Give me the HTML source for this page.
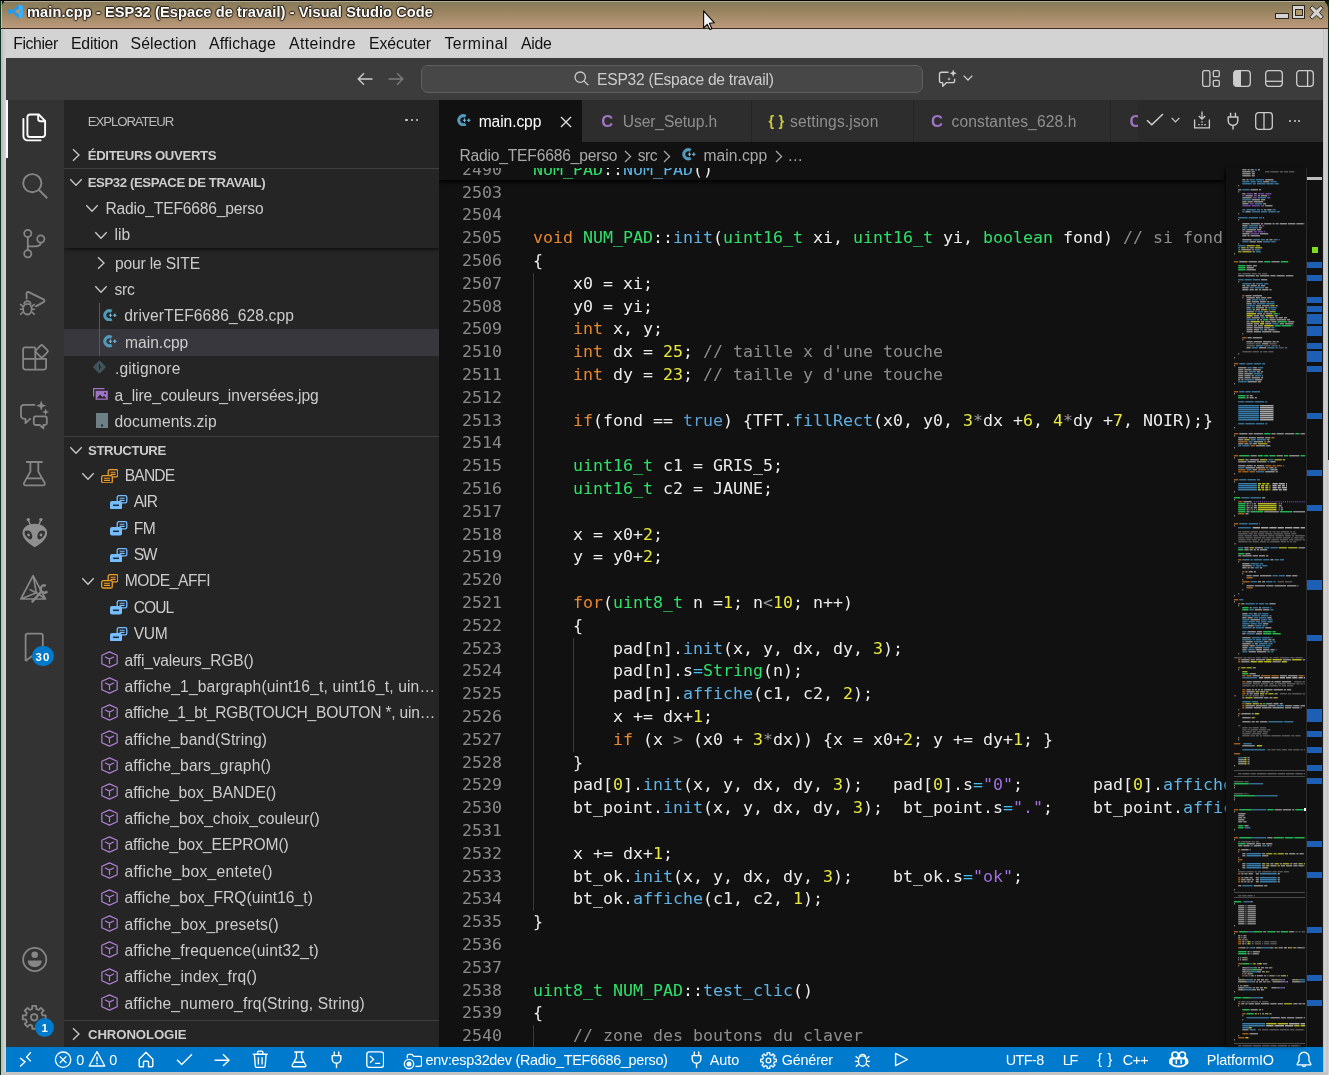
<!DOCTYPE html>
<html lang="fr"><head><meta charset="utf-8"><title>main.cpp - ESP32 (Espace de travail) - Visual Studio Code</title>
<style>
html,body{margin:0;padding:0}
body{width:1329px;height:1075px;overflow:hidden;position:relative;background:#c9c9c9;font-family:"Liberation Sans", sans-serif;}
#root{position:absolute;left:0;top:0;width:1329px;height:1075px;overflow:hidden;will-change:transform}
.r{position:absolute;display:block}
.t{position:absolute;white-space:pre;line-height:20px;height:20px}
.b{font-weight:bold}
.code{position:absolute;white-space:pre;font-family:"DejaVu Sans Mono", "Liberation Mono", monospace;font-size:16.63px;line-height:22.8px;height:22.8px;color:#ececec}
.ln{color:#8a8a8a}
.k{color:#e8872b}.ty{color:#2fe06a}.f{color:#5fb4e6}.n{color:#eaea3c}.c{color:#8c8c8c}.o{color:#9a9a9a}.bl{color:#5a9fd6}.eq{color:#45c0f5}.s{color:#a070e0}
</style></head>
<body>
<div id="root">
<div class="r" style="left:0px;top:0px;width:1329px;height:1075px;background:#c9c9c9;"></div>
<div class="r" style="left:0px;top:0px;width:1329px;height:10px;background:#0a1f15;"></div>
<div class="r" style="left:0px;top:0px;width:1px;height:1075px;background:#0d3320;"></div>
<div class="r" style="left:1328px;top:0px;width:1px;height:460px;background:#10241a;"></div>
<div class="r" style="left:1328px;top:460px;width:1px;height:615px;background:#d4d4d4;"></div>
<div class="r" style="left:0px;top:0px;width:1329px;height:1px;background:#060504;"></div>
<div class="r" style="left:1px;top:1px;width:1327px;height:27px;background:linear-gradient(#857b5a 0,#917f5c 25%,#a38a67 55%,#bb997c 100%);border-radius:7px 7px 0 0;"></div>
<div class="r" style="left:1px;top:28px;width:1327px;height:1px;background:#3a2c1e;"></div>
<div class="r" style="left:6px;top:29px;width:1317px;height:29px;background:#d3d3d3;"></div>
<div class="r" style="left:1px;top:29px;width:5px;height:1046px;background:linear-gradient(90deg,#b9bcbb,#d6d6d6);"></div>
<div class="r" style="left:1323px;top:29px;width:5px;height:1046px;background:linear-gradient(90deg,#b5b5b5 0,#d2d2d2 30%,#c4c6c4);"></div>
<div class="r" style="left:1px;top:1072px;width:1327px;height:3px;background:#c4c4c4;"></div>
<div class="t" style="left:27.0px;top:1.9px;font-size:14.6px;color:#fff;font-weight:bold;letter-spacing:0.085px;text-shadow:0 0 2px #2a2218,0 1px 1px #2a2218,1px 0 1px #2a2218,-1px 0 1px #2a2218,0 -1px 1px #2a2218;">main.cpp - ESP32 (Espace de travail) - Visual Studio Code</div>
<div class="t" style="left:13.2px;top:34.2px;font-size:15.8px;color:#111;letter-spacing:-0.387px;">Fichier</div>
<div class="t" style="left:71.0px;top:34.2px;font-size:15.8px;color:#111;letter-spacing:-0.188px;">Edition</div>
<div class="t" style="left:130.5px;top:34.2px;font-size:15.8px;color:#111;letter-spacing:0.111px;">Sélection</div>
<div class="t" style="left:209.0px;top:34.2px;font-size:15.8px;color:#111;letter-spacing:0.156px;">Affichage</div>
<div class="t" style="left:289.0px;top:34.2px;font-size:15.8px;color:#111;letter-spacing:0.418px;">Atteindre</div>
<div class="t" style="left:369.0px;top:34.2px;font-size:15.8px;color:#111;letter-spacing:-0.043px;">Exécuter</div>
<div class="t" style="left:444.5px;top:34.2px;font-size:15.8px;color:#111;letter-spacing:0.475px;">Terminal</div>
<div class="t" style="left:521.0px;top:34.2px;font-size:15.8px;color:#111;letter-spacing:-0.281px;">Aide</div>
<div class="r" style="left:6px;top:58px;width:1317px;height:42px;background:#3c3c3c;"></div>
<div class="r" style="left:6px;top:100px;width:58px;height:947px;background:#333333;"></div>
<div class="r" style="left:64px;top:100px;width:375px;height:947px;background:#252526;"></div>
<div class="r" style="left:439px;top:100px;width:884px;height:42px;background:#252526;"></div>
<div class="r" style="left:439px;top:142px;width:884px;height:905px;background:#111111;"></div>
<div class="r" style="left:6px;top:1047px;width:1317px;height:25px;background:#007acc;"></div>
<div class="r" style="left:439px;top:168px;width:787px;height:879px;overflow:hidden">
<div class="r" style="left:94.0px;top:104.9px;width:1px;height:638.4px;background:#3a3a3a"></div>
<div class="r" style="left:134.0px;top:469.6px;width:1px;height:114.0px;background:#3a3a3a"></div>
<div class="r" style="left:94.0px;top:857.2px;width:1px;height:45.6px;background:#3a3a3a"></div>
<div class="code ln" style="left:23.0px;top:13.65px">2503</div>
<div class="code ln" style="left:23.0px;top:36.45px">2504</div>
<div class="code ln" style="left:23.0px;top:59.25px">2505</div>
<div class="code" style="left:94.0px;top:59.25px"><span class="k">void</span> <span class="ty">NUM_PAD</span>::<span class="f">init</span>(<span class="ty">uint16_t</span> xi, <span class="ty">uint16_t</span> yi, <span class="ty">boolean</span> fond) <span class="c">// si fond == true, efface le fond</span></div>
<div class="code ln" style="left:23.0px;top:82.05px">2506</div>
<div class="code" style="left:94.0px;top:82.05px">{</div>
<div class="code ln" style="left:23.0px;top:104.85px">2507</div>
<div class="code" style="left:94.0px;top:104.85px">    x0 = xi;</div>
<div class="code ln" style="left:23.0px;top:127.65px">2508</div>
<div class="code" style="left:94.0px;top:127.65px">    y0 = yi;</div>
<div class="code ln" style="left:23.0px;top:150.45px">2509</div>
<div class="code" style="left:94.0px;top:150.45px">    <span class="k">int</span> x, y;</div>
<div class="code ln" style="left:23.0px;top:173.25px">2510</div>
<div class="code" style="left:94.0px;top:173.25px">    <span class="k">int</span> dx = <span class="n">25</span>; <span class="c">// taille x d'une touche</span></div>
<div class="code ln" style="left:23.0px;top:196.05px">2511</div>
<div class="code" style="left:94.0px;top:196.05px">    <span class="k">int</span> dy = <span class="n">23</span>; <span class="c">// taille y d'une touche</span></div>
<div class="code ln" style="left:23.0px;top:218.85px">2512</div>
<div class="code ln" style="left:23.0px;top:241.65px">2513</div>
<div class="code" style="left:94.0px;top:241.65px">    <span class="k">if</span>(fond == <span class="bl">true</span>) {TFT.<span class="f">fillRect</span>(x0, y0, <span class="n">3</span><span class="o">*</span>dx +<span class="n">6</span>, <span class="n">4</span><span class="o">*</span>dy +<span class="n">7</span>, NOIR);}</div>
<div class="code ln" style="left:23.0px;top:264.45px">2514</div>
<div class="code ln" style="left:23.0px;top:287.25px">2515</div>
<div class="code" style="left:94.0px;top:287.25px">    <span class="ty">uint16_t</span> c1 = GRIS_5;</div>
<div class="code ln" style="left:23.0px;top:310.05px">2516</div>
<div class="code" style="left:94.0px;top:310.05px">    <span class="ty">uint16_t</span> c2 = JAUNE;</div>
<div class="code ln" style="left:23.0px;top:332.85px">2517</div>
<div class="code ln" style="left:23.0px;top:355.65px">2518</div>
<div class="code" style="left:94.0px;top:355.65px">    x = x0+<span class="n">2</span>;</div>
<div class="code ln" style="left:23.0px;top:378.45px">2519</div>
<div class="code" style="left:94.0px;top:378.45px">    y = y0+<span class="n">2</span>;</div>
<div class="code ln" style="left:23.0px;top:401.25px">2520</div>
<div class="code ln" style="left:23.0px;top:424.05px">2521</div>
<div class="code" style="left:94.0px;top:424.05px">    <span class="k">for</span>(<span class="ty">uint8_t</span> n =<span class="n">1</span>; n<span class="o">&lt;</span><span class="n">10</span>; n++)</div>
<div class="code ln" style="left:23.0px;top:446.85px">2522</div>
<div class="code" style="left:94.0px;top:446.85px">    {</div>
<div class="code ln" style="left:23.0px;top:469.65px">2523</div>
<div class="code" style="left:94.0px;top:469.65px">        pad[n].<span class="f">init</span>(x, y, dx, dy, <span class="n">3</span>);</div>
<div class="code ln" style="left:23.0px;top:492.45px">2524</div>
<div class="code" style="left:94.0px;top:492.45px">        pad[n].s<span class="eq">=</span><span class="ty">String</span>(n);</div>
<div class="code ln" style="left:23.0px;top:515.25px">2525</div>
<div class="code" style="left:94.0px;top:515.25px">        pad[n].<span class="f">affiche</span>(c1, c2, <span class="n">2</span>);</div>
<div class="code ln" style="left:23.0px;top:538.05px">2526</div>
<div class="code" style="left:94.0px;top:538.05px">        x += dx+<span class="n">1</span>;</div>
<div class="code ln" style="left:23.0px;top:560.85px">2527</div>
<div class="code" style="left:94.0px;top:560.85px">        <span class="k">if</span> (x <span class="o">&gt;</span> (x0 + <span class="n">3</span><span class="o">*</span>dx)) {x = x0+<span class="n">2</span>; y += dy+<span class="n">1</span>; }</div>
<div class="code ln" style="left:23.0px;top:583.65px">2528</div>
<div class="code" style="left:94.0px;top:583.65px">    }</div>
<div class="code ln" style="left:23.0px;top:606.45px">2529</div>
<div class="code" style="left:94.0px;top:606.45px">    pad[<span class="n">0</span>].<span class="f">init</span>(x, y, dx, dy, <span class="n">3</span>);   pad[<span class="n">0</span>].s<span class="eq">=</span><span class="s">"0"</span>;       pad[<span class="n">0</span>].<span class="f">affiche</span>(c1, c2, <span class="n">0</span>);</div>
<div class="code ln" style="left:23.0px;top:629.25px">2530</div>
<div class="code" style="left:94.0px;top:629.25px">    bt_point.<span class="f">init</span>(x, y, dx, dy, <span class="n">3</span>);  bt_point.s<span class="eq">=</span><span class="s">"."</span>;    bt_point.<span class="f">affiche</span>(c1, c2, <span class="n">0</span>);</div>
<div class="code ln" style="left:23.0px;top:652.05px">2531</div>
<div class="code ln" style="left:23.0px;top:674.85px">2532</div>
<div class="code" style="left:94.0px;top:674.85px">    x += dx+<span class="n">1</span>;</div>
<div class="code ln" style="left:23.0px;top:697.65px">2533</div>
<div class="code" style="left:94.0px;top:697.65px">    bt_ok.<span class="f">init</span>(x, y, dx, dy, <span class="n">3</span>);    bt_ok.s<span class="eq">=</span><span class="s">"ok"</span>;</div>
<div class="code ln" style="left:23.0px;top:720.45px">2534</div>
<div class="code" style="left:94.0px;top:720.45px">    bt_ok.<span class="f">affiche</span>(c1, c2, <span class="n">1</span>);</div>
<div class="code ln" style="left:23.0px;top:743.25px">2535</div>
<div class="code" style="left:94.0px;top:743.25px">}</div>
<div class="code ln" style="left:23.0px;top:766.05px">2536</div>
<div class="code ln" style="left:23.0px;top:788.85px">2537</div>
<div class="code ln" style="left:23.0px;top:811.65px">2538</div>
<div class="code" style="left:94.0px;top:811.65px"><span class="ty">uint8_t</span> <span class="ty">NUM_PAD</span>::<span class="f">test_clic</span>()</div>
<div class="code ln" style="left:23.0px;top:834.45px">2539</div>
<div class="code" style="left:94.0px;top:834.45px">{</div>
<div class="code ln" style="left:23.0px;top:857.25px">2540</div>
<div class="code" style="left:94.0px;top:857.25px">    <span class="c">// zone des boutons du claver</span></div>
<div class="r" style="left:0;top:0;width:785px;height:12px;background:#111;box-shadow:0 2px 4px #000;overflow:hidden">
<div class="code ln" style="left:23.0px;top:-8.80px">2490</div>
<div class="code" style="left:94.0px;top:-8.80px"><span class="ty">NUM_PAD</span>::<span class="f">NUM_PAD</span>()</div>
</div>
</div>
<div class="t" style="left:87.7px;top:111.6px;font-size:13.2px;color:#bbbbbb;letter-spacing:-1.056px;">EXPLORATEUR</div>
<div class="r" style="left:405.3px;top:118.9px;width:2.6px;height:2.6px;background:#d0d0d0;border-radius:1.3px;"></div>
<div class="r" style="left:410.5px;top:118.9px;width:2.6px;height:2.6px;background:#d0d0d0;border-radius:1.3px;"></div>
<div class="r" style="left:415.7px;top:118.9px;width:2.6px;height:2.6px;background:#d0d0d0;border-radius:1.3px;"></div>
<svg class="r" style="left:68px;top:147.3px;" width="16" height="16" viewBox="0 0 16 16"><polyline points="5.00,2.30 11.00,8 5.00,13.70" fill="none" stroke="#c8c8c8" stroke-width="1.35"/></svg>
<div class="t" style="left:87.7px;top:146.1px;font-size:13.2px;color:#cccccc;font-weight:bold;letter-spacing:-0.344px;">ÉDITEURS OUVERTS</div>
<div class="r" style="left:64px;top:168px;width:375px;height:1px;background:#3f3f40;"></div>
<svg class="r" style="left:68px;top:174px;" width="16" height="16" viewBox="0 0 16 16"><polyline points="2.30,5.30 8,11.30 13.70,5.30" fill="none" stroke="#c8c8c8" stroke-width="1.35"/></svg>
<div class="t" style="left:87.7px;top:173.3px;font-size:13.2px;color:#cccccc;font-weight:bold;letter-spacing:-0.404px;">ESP32 (ESPACE DE TRAVAIL)</div>
<div class="r" style="left:64px;top:329.2px;width:375px;height:26.4px;background:#37373d;"></div>
<div class="r" style="left:99px;top:302.8px;width:1px;height:52.8px;background:#585858;"></div>
<svg class="r" style="left:93.3px;top:254.5px;" width="16" height="16" viewBox="0 0 16 16"><polyline points="5.00,2.30 11.00,8 5.00,13.70" fill="none" stroke="#c8c8c8" stroke-width="1.35"/></svg>
<div class="t" style="left:115.0px;top:253.6px;font-size:15.6px;color:#cccccc;letter-spacing:-0.148px;">pour le SITE</div>
<svg class="r" style="left:93px;top:281.4px;" width="16" height="16" viewBox="0 0 16 16"><polyline points="2.30,5.30 8,11.30 13.70,5.30" fill="none" stroke="#c8c8c8" stroke-width="1.35"/></svg>
<div class="t" style="left:114.5px;top:280.0px;font-size:15.6px;color:#cccccc;letter-spacing:-0.300px;">src</div>
<div class="t" style="left:124.3px;top:306.4px;font-size:15.6px;color:#cccccc;letter-spacing:0.119px;">driverTEF6686_628.cpp</div>
<div class="t" style="left:125.0px;top:332.8px;font-size:15.6px;color:#cccccc;">main.cpp</div>
<div class="t" style="left:115.0px;top:359.2px;font-size:15.6px;color:#cccccc;letter-spacing:0.134px;">.gitignore</div>
<div class="t" style="left:114.5px;top:385.6px;font-size:15.6px;color:#cccccc;letter-spacing:-0.073px;">a_lire_couleurs_inversées.jpg</div>
<div class="t" style="left:114.5px;top:412.0px;font-size:15.6px;color:#cccccc;letter-spacing:0.127px;">documents.zip</div>
<div class="r" style="left:64px;top:195px;width:375px;height:62px;overflow:hidden"><div class="r" style="left:0;top:0;width:375px;height:53px;background:#252526;box-shadow:0 1px 4px rgba(0,0,0,.8)"></div></div>
<svg class="r" style="left:84px;top:200.2px;" width="16" height="16" viewBox="0 0 16 16"><polyline points="2.30,5.30 8,11.30 13.70,5.30" fill="none" stroke="#c8c8c8" stroke-width="1.35"/></svg>
<div class="t" style="left:105.4px;top:198.6px;font-size:15.6px;color:#cccccc;letter-spacing:-0.166px;">Radio_TEF6686_perso</div>
<svg class="r" style="left:93px;top:226.6px;" width="16" height="16" viewBox="0 0 16 16"><polyline points="2.30,5.30 8,11.30 13.70,5.30" fill="none" stroke="#c8c8c8" stroke-width="1.35"/></svg>
<div class="t" style="left:114.5px;top:225.0px;font-size:15.6px;color:#cccccc;letter-spacing:0.032px;">lib</div>
<div class="r" style="left:64px;top:436px;width:375px;height:1px;background:#3f3f40;"></div>
<svg class="r" style="left:68px;top:442px;" width="16" height="16" viewBox="0 0 16 16"><polyline points="2.30,5.30 8,11.30 13.70,5.30" fill="none" stroke="#c8c8c8" stroke-width="1.35"/></svg>
<div class="t" style="left:88.0px;top:441.1px;font-size:13.2px;color:#cccccc;font-weight:bold;letter-spacing:-0.392px;">STRUCTURE</div>
<svg class="r" style="left:79.5px;top:467.7px;" width="16" height="16" viewBox="0 0 16 16"><polyline points="2.30,5.30 8,11.30 13.70,5.30" fill="none" stroke="#c8c8c8" stroke-width="1.35"/></svg>
<svg class="r" style="left:100.8px;top:468.5px;" width="17.5" height="14.6" viewBox="0 0 17.5 14.6"><rect x="7.2" y="0.7" width="9.6" height="7.2" rx="1.6" fill="none" stroke="#ee9d28" stroke-width="1.3"/><path d="M9.6 3.2h5M9.6 5.4h5" stroke="#ee9d28" stroke-width="1.1"/><rect x="0.7" y="6.6" width="10.6" height="7.4" rx="1.6" fill="#252526" stroke="#ee9d28" stroke-width="1.3"/><path d="M3 9.2h6M3 11.4h6" stroke="#ee9d28" stroke-width="1.1"/></svg>
<div class="t" style="left:124.7px;top:465.7px;font-size:15.6px;color:#cccccc;letter-spacing:-0.807px;">BANDE</div>
<svg class="r" style="left:110.2px;top:494.7px;" width="17.5" height="14.6" viewBox="0 0 17.5 14.6"><rect x="7.2" y="0.7" width="9.6" height="7.2" rx="1.6" fill="none" stroke="#75beff" stroke-width="1.3"/><path d="M9.6 3.2h5M9.6 5.4h5" stroke="#75beff" stroke-width="1.1"/><rect x="0" y="6" width="12" height="8.6" rx="2" fill="#75beff"/><path d="M3 10.3h6" stroke="#1d2a36" stroke-width="1.5"/></svg>
<div class="t" style="left:133.7px;top:492.1px;font-size:15.6px;color:#cccccc;letter-spacing:-0.833px;">AIR</div>
<svg class="r" style="left:110.2px;top:521.1px;" width="17.5" height="14.6" viewBox="0 0 17.5 14.6"><rect x="7.2" y="0.7" width="9.6" height="7.2" rx="1.6" fill="none" stroke="#75beff" stroke-width="1.3"/><path d="M9.6 3.2h5M9.6 5.4h5" stroke="#75beff" stroke-width="1.1"/><rect x="0" y="6" width="12" height="8.6" rx="2" fill="#75beff"/><path d="M3 10.3h6" stroke="#1d2a36" stroke-width="1.5"/></svg>
<div class="t" style="left:133.7px;top:518.5px;font-size:15.6px;color:#cccccc;letter-spacing:-0.558px;">FM</div>
<svg class="r" style="left:110.2px;top:547.5px;" width="17.5" height="14.6" viewBox="0 0 17.5 14.6"><rect x="7.2" y="0.7" width="9.6" height="7.2" rx="1.6" fill="none" stroke="#75beff" stroke-width="1.3"/><path d="M9.6 3.2h5M9.6 5.4h5" stroke="#75beff" stroke-width="1.1"/><rect x="0" y="6" width="12" height="8.6" rx="2" fill="#75beff"/><path d="M3 10.3h6" stroke="#1d2a36" stroke-width="1.5"/></svg>
<div class="t" style="left:133.7px;top:544.9px;font-size:15.6px;color:#cccccc;letter-spacing:-1.312px;">SW</div>
<svg class="r" style="left:79.5px;top:573.3px;" width="16" height="16" viewBox="0 0 16 16"><polyline points="2.30,5.30 8,11.30 13.70,5.30" fill="none" stroke="#c8c8c8" stroke-width="1.35"/></svg>
<svg class="r" style="left:100.8px;top:574.1px;" width="17.5" height="14.6" viewBox="0 0 17.5 14.6"><rect x="7.2" y="0.7" width="9.6" height="7.2" rx="1.6" fill="none" stroke="#ee9d28" stroke-width="1.3"/><path d="M9.6 3.2h5M9.6 5.4h5" stroke="#ee9d28" stroke-width="1.1"/><rect x="0.7" y="6.6" width="10.6" height="7.4" rx="1.6" fill="#252526" stroke="#ee9d28" stroke-width="1.3"/><path d="M3 9.2h6M3 11.4h6" stroke="#ee9d28" stroke-width="1.1"/></svg>
<div class="t" style="left:124.7px;top:571.3px;font-size:15.6px;color:#cccccc;letter-spacing:-0.428px;">MODE_AFFI</div>
<svg class="r" style="left:110.2px;top:600.3px;" width="17.5" height="14.6" viewBox="0 0 17.5 14.6"><rect x="7.2" y="0.7" width="9.6" height="7.2" rx="1.6" fill="none" stroke="#75beff" stroke-width="1.3"/><path d="M9.6 3.2h5M9.6 5.4h5" stroke="#75beff" stroke-width="1.1"/><rect x="0" y="6" width="12" height="8.6" rx="2" fill="#75beff"/><path d="M3 10.3h6" stroke="#1d2a36" stroke-width="1.5"/></svg>
<div class="t" style="left:133.7px;top:597.7px;font-size:15.6px;color:#cccccc;letter-spacing:-0.957px;">COUL</div>
<svg class="r" style="left:110.2px;top:626.7px;" width="17.5" height="14.6" viewBox="0 0 17.5 14.6"><rect x="7.2" y="0.7" width="9.6" height="7.2" rx="1.6" fill="none" stroke="#75beff" stroke-width="1.3"/><path d="M9.6 3.2h5M9.6 5.4h5" stroke="#75beff" stroke-width="1.1"/><rect x="0" y="6" width="12" height="8.6" rx="2" fill="#75beff"/><path d="M3 10.3h6" stroke="#1d2a36" stroke-width="1.5"/></svg>
<div class="t" style="left:133.7px;top:624.1px;font-size:15.6px;color:#cccccc;letter-spacing:-0.253px;">VUM</div>
<svg class="r" style="left:101px;top:651px;" width="17" height="17" viewBox="0 0 18 18"><path d="M9 .9 L17.100 4.500 L17.100 13.500 L9 17.100 L.9 13.500 L.9 4.500 Z" fill="none" stroke="#b180d7" stroke-width="1.250" stroke-linejoin="round"/><path d="M4.600 6.400 L9 8.600 L13.400 6.400 M9 8.600 L9 13.400" fill="none" stroke="#b180d7" stroke-width="1.250" stroke-linecap="round"/></svg>
<div class="t" style="left:124.5px;top:650.5px;font-size:15.6px;color:#cccccc;letter-spacing:-0.190px;">affi_valeurs_RGB()</div>
<svg class="r" style="left:101px;top:677.4px;" width="17" height="17" viewBox="0 0 18 18"><path d="M9 .9 L17.100 4.500 L17.100 13.500 L9 17.100 L.9 13.500 L.9 4.500 Z" fill="none" stroke="#b180d7" stroke-width="1.250" stroke-linejoin="round"/><path d="M4.600 6.400 L9 8.600 L13.400 6.400 M9 8.600 L9 13.400" fill="none" stroke="#b180d7" stroke-width="1.250" stroke-linecap="round"/></svg>
<div class="t" style="left:124.5px;top:676.9px;font-size:15.6px;color:#cccccc;letter-spacing:0.155px;">affiche_1_bargraph(uint16_t, uint16_t, uin…</div>
<svg class="r" style="left:101px;top:703.8px;" width="17" height="17" viewBox="0 0 18 18"><path d="M9 .9 L17.100 4.500 L17.100 13.500 L9 17.100 L.9 13.500 L.9 4.500 Z" fill="none" stroke="#b180d7" stroke-width="1.250" stroke-linejoin="round"/><path d="M4.600 6.400 L9 8.600 L13.400 6.400 M9 8.600 L9 13.400" fill="none" stroke="#b180d7" stroke-width="1.250" stroke-linecap="round"/></svg>
<div class="t" style="left:124.5px;top:703.3px;font-size:15.6px;color:#cccccc;letter-spacing:-0.199px;">affiche_1_bt_RGB(TOUCH_BOUTON *, uin…</div>
<svg class="r" style="left:101px;top:730.2px;" width="17" height="17" viewBox="0 0 18 18"><path d="M9 .9 L17.100 4.500 L17.100 13.500 L9 17.100 L.9 13.500 L.9 4.500 Z" fill="none" stroke="#b180d7" stroke-width="1.250" stroke-linejoin="round"/><path d="M4.600 6.400 L9 8.600 L13.400 6.400 M9 8.600 L9 13.400" fill="none" stroke="#b180d7" stroke-width="1.250" stroke-linecap="round"/></svg>
<div class="t" style="left:124.5px;top:729.7px;font-size:15.6px;color:#cccccc;letter-spacing:0.127px;">affiche_band(String)</div>
<svg class="r" style="left:101px;top:756.6px;" width="17" height="17" viewBox="0 0 18 18"><path d="M9 .9 L17.100 4.500 L17.100 13.500 L9 17.100 L.9 13.500 L.9 4.500 Z" fill="none" stroke="#b180d7" stroke-width="1.250" stroke-linejoin="round"/><path d="M4.600 6.400 L9 8.600 L13.400 6.400 M9 8.600 L9 13.400" fill="none" stroke="#b180d7" stroke-width="1.250" stroke-linecap="round"/></svg>
<div class="t" style="left:124.5px;top:756.1px;font-size:15.6px;color:#cccccc;letter-spacing:0.154px;">affiche_bars_graph()</div>
<svg class="r" style="left:101px;top:783px;" width="17" height="17" viewBox="0 0 18 18"><path d="M9 .9 L17.100 4.500 L17.100 13.500 L9 17.100 L.9 13.500 L.9 4.500 Z" fill="none" stroke="#b180d7" stroke-width="1.250" stroke-linejoin="round"/><path d="M4.600 6.400 L9 8.600 L13.400 6.400 M9 8.600 L9 13.400" fill="none" stroke="#b180d7" stroke-width="1.250" stroke-linecap="round"/></svg>
<div class="t" style="left:124.5px;top:782.5px;font-size:15.6px;color:#cccccc;letter-spacing:-0.030px;">affiche_box_BANDE()</div>
<svg class="r" style="left:101px;top:809.4px;" width="17" height="17" viewBox="0 0 18 18"><path d="M9 .9 L17.100 4.500 L17.100 13.500 L9 17.100 L.9 13.500 L.9 4.500 Z" fill="none" stroke="#b180d7" stroke-width="1.250" stroke-linejoin="round"/><path d="M4.600 6.400 L9 8.600 L13.400 6.400 M9 8.600 L9 13.400" fill="none" stroke="#b180d7" stroke-width="1.250" stroke-linecap="round"/></svg>
<div class="t" style="left:124.5px;top:808.9px;font-size:15.6px;color:#cccccc;letter-spacing:0.016px;">affiche_box_choix_couleur()</div>
<svg class="r" style="left:101px;top:835.8px;" width="17" height="17" viewBox="0 0 18 18"><path d="M9 .9 L17.100 4.500 L17.100 13.500 L9 17.100 L.9 13.500 L.9 4.500 Z" fill="none" stroke="#b180d7" stroke-width="1.250" stroke-linejoin="round"/><path d="M4.600 6.400 L9 8.600 L13.400 6.400 M9 8.600 L9 13.400" fill="none" stroke="#b180d7" stroke-width="1.250" stroke-linecap="round"/></svg>
<div class="t" style="left:124.5px;top:835.3px;font-size:15.6px;color:#cccccc;letter-spacing:-0.101px;">affiche_box_EEPROM()</div>
<svg class="r" style="left:101px;top:862.2px;" width="17" height="17" viewBox="0 0 18 18"><path d="M9 .9 L17.100 4.500 L17.100 13.500 L9 17.100 L.9 13.500 L.9 4.500 Z" fill="none" stroke="#b180d7" stroke-width="1.250" stroke-linejoin="round"/><path d="M4.600 6.400 L9 8.600 L13.400 6.400 M9 8.600 L9 13.400" fill="none" stroke="#b180d7" stroke-width="1.250" stroke-linecap="round"/></svg>
<div class="t" style="left:124.5px;top:861.7px;font-size:15.6px;color:#cccccc;letter-spacing:0.320px;">affiche_box_entete()</div>
<svg class="r" style="left:101px;top:888.6px;" width="17" height="17" viewBox="0 0 18 18"><path d="M9 .9 L17.100 4.500 L17.100 13.500 L9 17.100 L.9 13.500 L.9 4.500 Z" fill="none" stroke="#b180d7" stroke-width="1.250" stroke-linejoin="round"/><path d="M4.600 6.400 L9 8.600 L13.400 6.400 M9 8.600 L9 13.400" fill="none" stroke="#b180d7" stroke-width="1.250" stroke-linecap="round"/></svg>
<div class="t" style="left:124.5px;top:888.1px;font-size:15.6px;color:#cccccc;letter-spacing:0.062px;">affiche_box_FRQ(uint16_t)</div>
<svg class="r" style="left:101px;top:915px;" width="17" height="17" viewBox="0 0 18 18"><path d="M9 .9 L17.100 4.500 L17.100 13.500 L9 17.100 L.9 13.500 L.9 4.500 Z" fill="none" stroke="#b180d7" stroke-width="1.250" stroke-linejoin="round"/><path d="M4.600 6.400 L9 8.600 L13.400 6.400 M9 8.600 L9 13.400" fill="none" stroke="#b180d7" stroke-width="1.250" stroke-linecap="round"/></svg>
<div class="t" style="left:124.5px;top:914.5px;font-size:15.6px;color:#cccccc;letter-spacing:0.225px;">affiche_box_presets()</div>
<svg class="r" style="left:101px;top:941.4px;" width="17" height="17" viewBox="0 0 18 18"><path d="M9 .9 L17.100 4.500 L17.100 13.500 L9 17.100 L.9 13.500 L.9 4.500 Z" fill="none" stroke="#b180d7" stroke-width="1.250" stroke-linejoin="round"/><path d="M4.600 6.400 L9 8.600 L13.400 6.400 M9 8.600 L9 13.400" fill="none" stroke="#b180d7" stroke-width="1.250" stroke-linecap="round"/></svg>
<div class="t" style="left:124.5px;top:940.9px;font-size:15.6px;color:#cccccc;letter-spacing:0.182px;">affiche_frequence(uint32_t)</div>
<svg class="r" style="left:101px;top:967.8px;" width="17" height="17" viewBox="0 0 18 18"><path d="M9 .9 L17.100 4.500 L17.100 13.500 L9 17.100 L.9 13.500 L.9 4.500 Z" fill="none" stroke="#b180d7" stroke-width="1.250" stroke-linejoin="round"/><path d="M4.600 6.400 L9 8.600 L13.400 6.400 M9 8.600 L9 13.400" fill="none" stroke="#b180d7" stroke-width="1.250" stroke-linecap="round"/></svg>
<div class="t" style="left:124.5px;top:967.3px;font-size:15.6px;color:#cccccc;letter-spacing:0.196px;">affiche_index_frq()</div>
<svg class="r" style="left:101px;top:994.2px;" width="17" height="17" viewBox="0 0 18 18"><path d="M9 .9 L17.100 4.500 L17.100 13.500 L9 17.100 L.9 13.500 L.9 4.500 Z" fill="none" stroke="#b180d7" stroke-width="1.250" stroke-linejoin="round"/><path d="M4.600 6.400 L9 8.600 L13.400 6.400 M9 8.600 L9 13.400" fill="none" stroke="#b180d7" stroke-width="1.250" stroke-linecap="round"/></svg>
<div class="t" style="left:124.5px;top:993.7px;font-size:15.6px;color:#cccccc;letter-spacing:0.170px;">affiche_numero_frq(String, String)</div>
<div class="r" style="left:64px;top:1020px;width:375px;height:1px;background:#3f3f40;"></div>
<svg class="r" style="left:68px;top:1026.3px;" width="16" height="16" viewBox="0 0 16 16"><polyline points="5.00,2.30 11.00,8 5.00,13.70" fill="none" stroke="#c8c8c8" stroke-width="1.35"/></svg>
<div class="t" style="left:88.0px;top:1024.9px;font-size:13.2px;color:#cccccc;font-weight:bold;letter-spacing:-0.104px;">CHRONOLOGIE</div>
<svg class="r" style="left:355.5px;top:70.5px;" width="18" height="16" viewBox="0 0 18 16"><path d="M16.5 8H2.2M8 2.2L2.2 8l5.8 5.8" fill="none" stroke="#cccccc" stroke-width="1.35"/></svg>
<svg class="r" style="left:386.5px;top:70.5px;" width="18" height="16" viewBox="0 0 18 16"><path d="M1.5 8h14.3M10 2.2L15.8 8l-5.8 5.8" fill="none" stroke="#7c7c7c" stroke-width="1.35"/></svg>
<div class="r" style="left:421px;top:65px;width:501.5px;height:28px;background:#474747;border:1px solid #5f5f5f;border-radius:7px;box-sizing:border-box;"></div>
<svg class="r" style="left:573.5px;top:71px;" width="15" height="15" viewBox="0 0 15 15"><circle cx="6.2" cy="6.2" r="5.2" fill="none" stroke="#ccc" stroke-width="1.3"/><path d="M9.9 9.9L14.3 14.3" stroke="#ccc" stroke-width="1.3"/></svg>
<div class="t" style="left:597.1px;top:69.8px;font-size:15.6px;color:#cccccc;letter-spacing:-0.255px;">ESP32 (Espace de travail)</div>
<svg class="r" style="left:938px;top:68.5px;" width="20" height="19" viewBox="0 0 20 19"><path d="M10.5 3.2H3.4a1.9 1.9 0 0 0-1.9 1.9v6.6a1.9 1.9 0 0 0 1.9 1.9h1.3v3.6l4-3.6h6a1.9 1.9 0 0 0 1.9-1.9V9.8" fill="none" stroke="#d0d0d0" stroke-width="1.35" stroke-linejoin="round"/><path d="M15.2 0.6l1 2.7 2.7 1-2.7 1-1 2.7-1-2.7-2.7-1 2.7-1z" fill="#d0d0d0"/><path d="M11 8.2l.5 1.3 1.3.5-1.3.5-.5 1.3-.5-1.3-1.3-.5 1.3-.5z" fill="#d0d0d0"/></svg>
<svg class="r" style="left:963px;top:74px;" width="10" height="8" viewBox="0 0 10 8"><path d="M0.6 1.6L5 6l4.4-4.4" fill="none" stroke="#ccc" stroke-width="1.3"/></svg>
<svg class="r" style="left:1201.5px;top:70px;" width="18" height="17" viewBox="0 0 18 17"><rect x="0.7" y="0.7" width="7.2" height="15.6" rx="1.6" fill="none" stroke="#ccc" stroke-width="1.3"/><rect x="11.3" y="0.7" width="6" height="6" rx="1.3" fill="none" stroke="#ccc" stroke-width="1.3"/><rect x="11.3" y="10.3" width="6" height="6" rx="1.3" fill="none" stroke="#ccc" stroke-width="1.3"/></svg>
<svg class="r" style="left:1233.3px;top:70px;" width="18" height="17" viewBox="0 0 18 17"><rect x="0.7" y="0.7" width="16.6" height="15.6" rx="3" fill="none" stroke="#ccc" stroke-width="1.3"/><path d="M3.5 0.7H8v15.6H3.5a2.8 2.8 0 0 1-2.8-2.8v-10A2.8 2.8 0 0 1 3.500 .7z" fill="#ccc"/></svg>
<svg class="r" style="left:1264.8px;top:70px;" width="18" height="17" viewBox="0 0 18 17"><rect x="0.7" y="0.7" width="16.6" height="15.6" rx="3" fill="none" stroke="#ccc" stroke-width="1.3"/><path d="M0.7 11.3h16.6" stroke="#ccc" stroke-width="1.3"/></svg>
<svg class="r" style="left:1296px;top:70px;" width="18" height="17" viewBox="0 0 18 17"><rect x="0.7" y="0.7" width="16.6" height="15.6" rx="3" fill="none" stroke="#ccc" stroke-width="1.3"/><path d="M11.6 0.7v15.6" stroke="#ccc" stroke-width="1.3"/></svg>
<div class="r" style="left:439px;top:100px;width:143.3px;height:42px;background:#111111;"></div>
<div class="r" style="left:582.3px;top:100px;width:168.7px;height:42px;background:#2d2d2d;"></div>
<div class="r" style="left:752px;top:100px;width:160.5px;height:42px;background:#2d2d2d;"></div>
<div class="r" style="left:913.5px;top:100px;width:196.5px;height:42px;background:#2d2d2d;"></div>
<div class="r" style="left:1111px;top:100px;width:212px;height:42px;background:#2d2d2d;"></div>
<svg class="r" style="left:456.8px;top:113.9px;" width="14" height="12.5" viewBox="0 0 14 12.5"><path d="M8.700 2.400A4.500 4.500 0 1 0 8.700 10.100" fill="none" stroke="#519aba" stroke-width="3"/><path d="M5.800 6.250h3.400M7.500 4.550v3.400M10.100 6.250h3.400M11.800 4.550v3.400" stroke="#79bbd8" stroke-width="1.150"/></svg>
<div class="t" style="left:478.7px;top:111.7px;font-size:15.6px;color:#ffffff;letter-spacing:-0.084px;">main.cpp</div>
<svg class="r" style="left:559.5px;top:115.5px;" width="12" height="12" viewBox="0 0 12 12"><path d="M1 1l10 10M11 1L1 11" stroke="#e0e0e0" stroke-width="1.35"/></svg>
<div class="t" style="left:601.2px;top:111.1px;font-size:16.5px;color:#a074c4;font-weight:bold;letter-spacing:-0.519px;">C</div>
<div class="t" style="left:622.8px;top:111.7px;font-size:15.6px;color:#8f8f8f;letter-spacing:-0.088px;">User_Setup.h</div>
<div class="t" style="left:768.6px;top:111.3px;font-size:14.5px;color:#cbcb41;font-weight:bold;letter-spacing:0.057px;">{ }</div>
<div class="t" style="left:790.0px;top:111.7px;font-size:15.6px;color:#8f8f8f;letter-spacing:0.139px;">settings.json</div>
<div class="t" style="left:931.0px;top:111.1px;font-size:16.5px;color:#a074c4;font-weight:bold;letter-spacing:-0.519px;">C</div>
<div class="t" style="left:951.5px;top:111.7px;font-size:15.6px;color:#8f8f8f;letter-spacing:0.117px;">constantes_628.h</div>
<div class="t" style="left:1129.5px;top:111.1px;font-size:16.5px;color:#a074c4;font-weight:bold;letter-spacing:-0.519px;">C</div>
<div class="r" style="left:1137.5px;top:100px;width:185.5px;height:42px;background:#2a2a2b;"></div>
<svg class="r" style="left:1146px;top:113px;" width="18" height="13" viewBox="0 0 18 13"><path d="M1 7.2l4.8 4.6L17 1" fill="none" stroke="#d0d0d0" stroke-width="1.5"/></svg>
<svg class="r" style="left:1170.5px;top:117px;" width="9" height="6" viewBox="0 0 9 6"><path d="M0.6 0.8L4.5 4.8 8.4 0.8" fill="none" stroke="#ccc" stroke-width="1.2"/></svg>
<svg class="r" style="left:1193px;top:110.5px;" width="18" height="19" viewBox="0 0 18 19"><path d="M1.6 8.5v8.4h14.8V8.5" fill="none" stroke="#ccc" stroke-width="1.3"/><path d="M9 0.5v7.5M5.8 5L9 8.2 12.200 5" fill="none" stroke="#ccc" stroke-width="1.3"/><path d="M9 10.2v1.2M6 13v1.2M12 13v1.2M9 13v1.2" stroke="#ccc" stroke-width="1.5"/></svg>
<svg class="r" style="left:1227px;top:111.5px;" width="12" height="18" viewBox="0 0 12 18"><path d="M3.600 .8v4M8.400 .8v4" stroke="#ccc" stroke-width="1.4"/><path d="M1.200 5h9.600v3.600a4.800 4.800 0 0 1-9.600 0z" fill="none" stroke="#ccc" stroke-width="1.4" stroke-linejoin="round"/><path d="M6 13.400v4" stroke="#ccc" stroke-width="1.4"/></svg>
<svg class="r" style="left:1255px;top:111.5px;" width="18" height="18" viewBox="0 0 18 18"><rect x="0.7" y="0.7" width="16.6" height="16.6" rx="3" fill="none" stroke="#ccc" stroke-width="1.3"/><path d="M9 0.7v16.6" stroke="#ccc" stroke-width="1.3"/></svg>
<div class="r" style="left:1288.7px;top:119.6px;width:2.2px;height:2.2px;background:#ccc;border-radius:1.1px;"></div>
<div class="r" style="left:1293.5px;top:119.6px;width:2.2px;height:2.2px;background:#ccc;border-radius:1.1px;"></div>
<div class="r" style="left:1298.3px;top:119.6px;width:2.2px;height:2.2px;background:#ccc;border-radius:1.1px;"></div>
<div class="t" style="left:459.4px;top:146.1px;font-size:15.6px;color:#a9a9a9;letter-spacing:-0.176px;">Radio_TEF6686_perso</div>
<svg class="r" style="left:624.3px;top:149.5px;" width="8" height="13" viewBox="0 0 8 13"><path d="M1 1l5.600 5.500L1 12" fill="none" stroke="#a9a9a9" stroke-width="1.25"/></svg>
<div class="t" style="left:637.7px;top:146.1px;font-size:15.6px;color:#a9a9a9;letter-spacing:-0.497px;">src</div>
<svg class="r" style="left:663.3px;top:149.5px;" width="8" height="13" viewBox="0 0 8 13"><path d="M1 1l5.600 5.500L1 12" fill="none" stroke="#a9a9a9" stroke-width="1.25"/></svg>
<svg class="r" style="left:681.6px;top:148.4px;" width="14" height="12.5" viewBox="0 0 14 12.5"><path d="M8.700 2.400A4.500 4.500 0 1 0 8.700 10.100" fill="none" stroke="#519aba" stroke-width="3"/><path d="M5.800 6.250h3.400M7.500 4.550v3.400M10.100 6.250h3.400M11.800 4.550v3.400" stroke="#79bbd8" stroke-width="1.150"/></svg>
<div class="t" style="left:703.6px;top:146.1px;font-size:15.6px;color:#a9a9a9;letter-spacing:0.041px;">main.cpp</div>
<svg class="r" style="left:774.5px;top:149.5px;" width="8" height="13" viewBox="0 0 8 13"><path d="M1 1l5.600 5.500L1 12" fill="none" stroke="#a9a9a9" stroke-width="1.25"/></svg>
<div class="t" style="left:787.5px;top:146.1px;font-size:15.6px;color:#a9a9a9;letter-spacing:-2.094px;">…</div>
<div class="r" style="left:6px;top:100px;width:2px;height:58px;background:#ffffff;"></div>
<svg class="r" style="left:6px;top:100px;" width="58" height="60" viewBox="6 100 58 60"><path d="M30 114.500h8.800l6.300 6.300v13.600a2.600 2.600 0 0 1-2.600 2.600H30a2.600 2.600 0 0 1-2.600-2.600v-17.300a2.600 2.600 0 0 1 2.600-2.600z" fill="none" stroke="#fff" stroke-width="1.9" stroke-linejoin="round"/><path d="M38.200 114.800v4.300a2.200 2.200 0 0 0 2.200 2.200h4.400" fill="none" stroke="#fff" stroke-width="1.9"/><path d="M23.400 119v17.200a4.200 4.200 0 0 0 4.200 4.200h13" fill="none" stroke="#fff" stroke-width="1.9" stroke-linecap="round"/></svg>
<svg class="r" style="left:6px;top:160px;" width="58" height="60" viewBox="6 160 58 60"><circle cx="32.300" cy="183.200" r="9.100" fill="none" stroke="#868686" stroke-width="1.9"/><path d="M39 190l8.300 8.200" stroke="#868686" stroke-width="1.9"/></svg>
<svg class="r" style="left:6px;top:218px;" width="58" height="60" viewBox="6 218 58 60"><circle cx="27.800" cy="233.400" r="3.600" fill="none" stroke="#868686" stroke-width="1.800"/><circle cx="27.800" cy="253.800" r="3.600" fill="none" stroke="#868686" stroke-width="1.800"/><circle cx="40.800" cy="239" r="3.600" fill="none" stroke="#868686" stroke-width="1.800"/><path d="M27.800 237v13.200M40.800 242.600c0 3.400-2.400 3.800-6 3.800h-7" fill="none" stroke="#868686" stroke-width="1.800"/></svg>
<svg class="r" style="left:6px;top:276px;" width="58" height="60" viewBox="6 276 58 60"><path d="M26.600 298.600V293.300c0-1.200 1.100-1.700 2.100-1.200l14.800 7.300c1.300.7 1.300 2 0 2.700l-7.600 4.300" fill="none" stroke="#868686" stroke-width="1.800" stroke-linecap="round"/><ellipse cx="27.400" cy="309.200" rx="4.300" ry="5.300" fill="none" stroke="#868686" stroke-width="1.800"/><path d="M24 304.500a3.400 3.400 0 0 1 6.800 0" fill="none" stroke="#868686" stroke-width="1.600"/><path d="M23.100 306.500l-3-2.300M23.100 312l-3 2.600M31.700 306.500l3-2.300M31.700 312l3 2.600M22.800 309.200h-3M32 309.200h3" stroke="#868686" stroke-width="1.600"/></svg>
<svg class="r" style="left:6px;top:334px;" width="58" height="60" viewBox="6 334 58 60"><path d="M35.300 347.400h-10a2.200 2.200 0 0 0-2.200 2.200v17.800a2.200 2.200 0 0 0 2.200 2.200h18.600a2.200 2.200 0 0 0 2.200-2.200v-8.600H23.100M35.300 347.400v22.200" fill="none" stroke="#868686" stroke-width="1.800" stroke-linejoin="round"/><rect x="36.900" y="346.400" width="9.600" height="9.600" rx="1.600" transform="rotate(45 41.700 351.200)" fill="none" stroke="#868686" stroke-width="1.800"/></svg>
<svg class="r" style="left:6px;top:392px;" width="58" height="60" viewBox="6 392 58 60"><path d="M34.500 404.800H24a3 3 0 0 0-3 3v8a3 3 0 0 0 3 3h1.500v4.400l4.600-4.400" fill="none" stroke="#868686" stroke-width="1.800" stroke-linejoin="round" stroke-linecap="round"/><path d="M41.200 400.600l1.400 3.700 3.700 1.400-3.700 1.400-1.400 3.700-1.400-3.700-3.700-1.400 3.700-1.400z" fill="#868686"/><path d="M45.600 408.400l1 2.600 2.600 1-2.600 1-1 2.600-1-2.600-2.600-1 2.600-1z" fill="#868686"/><path d="M35.600 416.400h9.400a1.800 1.800 0 0 1 1.800 1.800v5a1.800 1.800 0 0 1-1.800 1.800h-1.600v3.400l-3.600-3.400h-4.200a1.800 1.800 0 0 1-1.800-1.800v-5a1.800 1.800 0 0 1 1.800-1.800z" fill="none" stroke="#868686" stroke-width="1.800" stroke-linejoin="round"/></svg>
<svg class="r" style="left:6px;top:450px;" width="58" height="60" viewBox="6 450 58 60"><path d="M26.100 462h16.500M30.400 462v9.600l-6.300 11.200c-.7 1.300 0 2.600 1.500 2.600h17.500c1.500 0 2.200-1.300 1.500-2.600l-6.300-11.200V462M26.600 478.400h15.500" fill="none" stroke="#868686" stroke-width="1.800" stroke-linejoin="round"/></svg>
<svg class="r" style="left:6px;top:508px;" width="58" height="60" viewBox="6 508 58 60"><path d="M34.800 523.800c7.400 0 12.300 4 12.300 9.200 0 6-6.800 11.200-12.300 14.200-5.500-3-12.300-8.200-12.300-14.200 0-5.200 4.900-9.200 12.300-9.200z" fill="#8f8f8f"/><path d="M28.300 520l2.300 5.500M40.900 520l-2.300 5.500" stroke="#8f8f8f" stroke-width="1.500"/><circle cx="28.300" cy="519.600" r="1.700" fill="#8f8f8f"/><circle cx="40.900" cy="519.600" r="1.700" fill="#8f8f8f"/><path d="M24.600 531.500c2.600-2 6.600-.8 7.500 3.500.6 2.800-.6 4.600-1.800 4.400-3-.6-6.300-4.300-5.700-7.900z" fill="#333"/><path d="M45 531.500c-2.600-2-6.600-.8-7.500 3.500-.6 2.800.6 4.600 1.800 4.400 3-.6 6.300-4.300 5.700-7.900z" fill="#333"/><circle cx="28.600" cy="535" r="1.400" fill="#8f8f8f"/><circle cx="41" cy="535" r="1.400" fill="#8f8f8f"/></svg>
<svg class="r" style="left:6px;top:566px;" width="58" height="60" viewBox="6 566 58 60"><path d="M33.100 575.600L20.800 599h24.700zM33.100 575.600l3.300 17.200M20.800 599l15.600-6.200M29.500 589.500l6.900 3.300M36.400 592.800l9.100 6.200" fill="none" stroke="#868686" stroke-width="1.700" stroke-linejoin="round"/><path d="M32.500 601.500l8.800-9.800" stroke="#868686" stroke-width="2.600" stroke-linecap="round"/><path d="M45.800 585.800a3.600 3.600 0 1 0 1.400 5.400" fill="none" stroke="#868686" stroke-width="2.400"/></svg>
<svg class="r" style="left:6px;top:624px;" width="58" height="60" viewBox="6 624 58 60"><path d="M25.600 661V635.800a2.200 2.200 0 0 1 2.200-2.200h12.800a2.200 2.200 0 0 1 2.200 2.200v12M25.600 661l7-5.400" fill="none" stroke="#868686" stroke-width="1.800" stroke-linejoin="round"/></svg>
<div class="r" style="left:31.9px;top:646.4px;width:22.2px;height:19.6px;background:#007acc;border-radius:10px;"></div>
<div class="t" style="left:35.6px;top:646.6px;font-size:11.4px;color:#fff;font-weight:bold;letter-spacing:0.958px;">30</div>
<svg class="r" style="left:6px;top:930px;" width="58" height="60" viewBox="6 930 58 60"><circle cx="34.700" cy="959.500" r="11.600" fill="none" stroke="#868686" stroke-width="1.800"/><circle cx="34.700" cy="954.700" r="3.300" fill="#868686"/><path d="M27.700 960.400h14c0 4-2.600 6.500-7 6.500s-7-2.500-7-6.500z" fill="#868686"/></svg>
<svg class="r" style="left:6px;top:990px;" width="58" height="57" viewBox="6 990 58 57"><path d="M32.21 1005.87 L36.19 1005.87 L36.21 1008.94 L38.69 1009.97 L40.87 1007.81 L43.69 1010.63 L41.53 1012.81 L42.56 1015.29 L45.63 1015.31 L45.63 1019.29 L42.56 1019.31 L41.53 1021.79 L43.69 1023.97 L40.87 1026.79 L38.69 1024.63 L36.21 1025.66 L36.19 1028.73 L32.21 1028.73 L32.19 1025.66 L29.71 1024.63 L27.53 1026.79 L24.71 1023.97 L26.87 1021.79 L25.84 1019.31 L22.77 1019.29 L22.77 1015.31 L25.84 1015.29 L26.87 1012.81 L24.71 1010.63 L27.53 1007.81 L29.71 1009.97 L32.19 1008.94 Z" fill="none" stroke="#868686" stroke-width="1.8" stroke-linejoin="round"/><circle cx="34.2" cy="1017.3" r="3.2" fill="none" stroke="#868686" stroke-width="1.8"/></svg>
<div class="r" style="left:34.7px;top:1017.8px;width:19.4px;height:19px;background:#007acc;border-radius:10px;"></div>
<div class="t" style="left:41.6px;top:1017.6px;font-size:11.4px;color:#fff;font-weight:bold;letter-spacing:-0.147px;">1</div>
<svg class="r" style="left:18px;top:1050px;" width="16" height="18" viewBox="0 0 16 18"><path d="M2.100 8l4.900 3.900-4.900 4.500M12.800 2.300L8.700 6.900l4.100 4.500" fill="none" stroke="#fff" stroke-width="1.4"/></svg>
<svg class="r" style="left:54px;top:1051px;" width="18" height="18" viewBox="0 0 18 18"><circle cx="9.100" cy="8.700" r="7.700" fill="none" stroke="#fff" stroke-width="1.3"/><path d="M5.800 5.400l6.600 6.600M12.400 5.400l-6.600 6.600" stroke="#fff" stroke-width="1.3"/></svg>
<div class="t" style="left:76.2px;top:1049.6px;font-size:14.4px;color:#ffffff;letter-spacing:-0.816px;">0</div>
<svg class="r" style="left:87.5px;top:1050px;" width="18" height="18" viewBox="0 0 18 18"><path d="M9 1.600L1.200 16h15.600z" fill="none" stroke="#fff" stroke-width="1.3" stroke-linejoin="round"/><path d="M9 6.500v5" stroke="#fff" stroke-width="1.4"/><circle cx="9" cy="13.500" r=".9" fill="#fff"/></svg>
<div class="t" style="left:109.3px;top:1049.6px;font-size:14.4px;color:#ffffff;letter-spacing:-0.816px;">0</div>
<svg class="r" style="left:138px;top:1050.5px;" width="16" height="17" viewBox="0 0 16 17"><path d="M1.200 8.200L8 1.300l6.800 6.900v6.600a1 1 0 0 1-1 1h-3.300v-4.600a1 1 0 0 0-1-1h-3a1 1 0 0 0-1 1v4.600H2.200a1 1 0 0 1-1-1z" fill="none" stroke="#fff" stroke-width="1.4" stroke-linejoin="round"/></svg>
<svg class="r" style="left:175.5px;top:1052.5px;" width="17" height="13" viewBox="0 0 17 13"><path d="M1 6.800l4.700 4.700L16 1.300" fill="none" stroke="#fff" stroke-width="1.4"/></svg>
<svg class="r" style="left:214px;top:1052.5px;" width="16" height="14" viewBox="0 0 16 14"><path d="M.6 7.200h14.400M9 1.300l6 5.900-6 5.900" fill="none" stroke="#fff" stroke-width="1.4"/></svg>
<svg class="r" style="left:252px;top:1049.5px;" width="16.5" height="18.5" viewBox="0 0 16.5 18.5"><path d="M.8 4.200h14.900M5.600 4V2.400a1.300 1.300 0 0 1 1.300-1.300h2.700a1.300 1.300 0 0 1 1.300 1.300V4M2.400 4.400l.9 11.600a1.500 1.500 0 0 0 1.500 1.400h6.900a1.500 1.500 0 0 0 1.500-1.400l.9-11.600" fill="none" stroke="#fff" stroke-width="1.35" stroke-linejoin="round"/><path d="M6.400 7.200v7.200M10.100 7.200v7.200" stroke="#fff" stroke-width="1.35"/></svg>
<svg class="r" style="left:290.5px;top:1051px;" width="16" height="17" viewBox="0 0 16 17"><path d="M3.300 1h9.400M5.400 1v5.600L1.300 14c-.4.900 0 1.700 1 1.700h11.400c1 0 1.400-.8 1-1.700L10.600 6.600V1M3.100 11.200h9.800" fill="none" stroke="#fff" stroke-width="1.35" stroke-linejoin="round"/></svg>
<svg class="r" style="left:331.1px;top:1050.5px;" width="11" height="18" viewBox="0 0 11 18"><path d="M3.300 .6v4M7.700 .6v4" stroke="#fff" stroke-width="1.4"/><path d="M1.200 4.600h8.600v3.400a4.300 4.300 0 0 1-8.600 0z" fill="none" stroke="#fff" stroke-width="1.4" stroke-linejoin="round"/><path d="M5.500 12.400v4.800" stroke="#fff" stroke-width="1.4"/></svg>
<svg class="r" style="left:365.5px;top:1050.5px;" width="18.5" height="17.5" viewBox="0 0 18.5 17.5"><rect x=".8" y=".8" width="16.800" height="15.600" rx="2.600" fill="none" stroke="#fff" stroke-width="1.35"/><path d="M4 5l3.600 3.400L4 11.800M9 12.300h5.200" fill="none" stroke="#fff" stroke-width="1.35"/></svg>
<svg class="r" style="left:402.5px;top:1052.5px;" width="19.5" height="17" viewBox="0 0 19.5 17"><path d="M4.300 5.300V3a1.600 1.600 0 0 1 1.600-1.600h3l1.700 1.900h6.400A1.600 1.600 0 0 1 18.600 4.900v6.900a1.600 1.600 0 0 1-1.600 1.600h-4.600" fill="none" stroke="#fff" stroke-width="1.35" stroke-linejoin="round"/><circle cx="6" cy="11" r="4.700" fill="none" stroke="#fff" stroke-width="1.35"/><circle cx="6" cy="11" r="2.500" fill="#fff"/></svg>
<div class="t" style="left:425.6px;top:1049.6px;font-size:14.4px;color:#ffffff;letter-spacing:-0.294px;">env:esp32dev (Radio_TEF6686_perso)</div>
<svg class="r" style="left:690.9px;top:1050.5px;" width="11" height="18" viewBox="0 0 11 18"><path d="M3.300 .6v4M7.700 .6v4" stroke="#fff" stroke-width="1.4"/><path d="M1.200 4.600h8.600v3.400a4.300 4.300 0 0 1-8.600 0z" fill="none" stroke="#fff" stroke-width="1.4" stroke-linejoin="round"/><path d="M5.500 12.400v4.800" stroke="#fff" stroke-width="1.4"/></svg>
<div class="t" style="left:709.8px;top:1049.6px;font-size:14.4px;color:#ffffff;letter-spacing:-0.054px;">Auto</div>
<svg class="r" style="left:760px;top:1051.5px;" width="17" height="17" viewBox="0 0 17 17"><path d="M7.14 0.72 L9.86 0.72 L9.88 2.76 L11.58 3.47 L13.04 2.04 L14.96 3.96 L13.53 5.42 L14.24 7.12 L16.28 7.14 L16.28 9.86 L14.24 9.88 L13.53 11.58 L14.96 13.04 L13.04 14.96 L11.58 13.53 L9.88 14.24 L9.86 16.28 L7.14 16.28 L7.12 14.24 L5.42 13.53 L3.96 14.96 L2.04 13.04 L3.47 11.58 L2.76 9.88 L0.72 9.86 L0.72 7.14 L2.76 7.12 L3.47 5.42 L2.04 3.96 L3.96 2.04 L5.42 3.47 L7.12 2.76 Z" fill="none" stroke="#fff" stroke-width="1.3" stroke-linejoin="round"/><circle cx="8.5" cy="8.5" r="2.3" fill="none" stroke="#fff" stroke-width="1.3"/></svg>
<div class="t" style="left:781.8px;top:1049.6px;font-size:14.4px;color:#ffffff;letter-spacing:-0.257px;">Générer</div>
<svg class="r" style="left:853.5px;top:1051.5px;" width="17" height="17" viewBox="0 0 17 17"><ellipse cx="8.500" cy="9" rx="4.100" ry="5.200" fill="none" stroke="#fff" stroke-width="1.35"/><path d="M5.300 5.600a3.200 3.200 0 0 1 6.400 0" fill="none" stroke="#fff" stroke-width="1.3"/><path d="M4.600 6.800L1.600 4.300M4.400 9.300H.9M4.800 12l-3 2.800M12.400 6.800l3-2.500M12.600 9.300h3.500M12.200 12l3 2.800" stroke="#fff" stroke-width="1.3"/></svg>
<svg class="r" style="left:893.5px;top:1052px;" width="15" height="15" viewBox="0 0 15 15"><path d="M1.600 1.400l11.800 6.100L1.600 13.600z" fill="none" stroke="#fff" stroke-width="1.4" stroke-linejoin="round"/></svg>
<div class="t" style="left:1005.8px;top:1049.6px;font-size:14.4px;color:#ffffff;letter-spacing:-0.595px;">UTF-8</div>
<div class="t" style="left:1062.7px;top:1049.6px;font-size:14.4px;color:#ffffff;letter-spacing:-1.300px;">LF</div>
<div class="t" style="left:1097.2px;top:1049.3px;font-size:14.4px;color:#ffffff;letter-spacing:0.725px;">{ }</div>
<div class="t" style="left:1122.7px;top:1049.6px;font-size:14.4px;color:#ffffff;letter-spacing:-0.568px;">C++</div>
<svg class="r" style="left:1167.5px;top:1050px;" width="21.5" height="18.5" viewBox="0 0 21.5 18.5"><path d="M10.700 2.900c-1.300-1.900-5-2.300-6.600-.6-1.200 1.300-1 3.200-.6 4.600C1.900 8 1 9.500 1 11v2.200c2.400 2.700 5.900 4.300 9.700 4.300s7.300-1.600 9.700-4.300V11c0-1.500-.9-3-2.500-4.100.4-1.400.6-3.300-.6-4.600-1.600-1.700-5.300-1.300-6.600.6z" fill="#fff"/><rect x="5" y="2.800" width="4.400" height="4.600" rx="1.800" fill="#007acc"/><rect x="12.100" y="2.800" width="4.400" height="4.600" rx="1.800" fill="#007acc"/><path d="M4.600 9.400h12.300v4.600c-1.800 1-3.900 1.500-6.200 1.500s-4.300-.5-6.100-1.500z" fill="#007acc"/><path d="M8.300 10.600v2.600M13.200 10.600v2.600" stroke="#fff" stroke-width="1.600" stroke-linecap="round"/></svg>
<div class="t" style="left:1206.8px;top:1049.6px;font-size:14.4px;color:#ffffff;letter-spacing:-0.167px;">PlatformIO</div>
<svg class="r" style="left:1295.5px;top:1050.5px;" width="16" height="18" viewBox="0 0 16 18"><path d="M8 1.200a5 5 0 0 0-5 5v3.600L1.200 13v.8h13.600V13L13 9.800V6.200a5 5 0 0 0-5-5z" fill="none" stroke="#fff" stroke-width="1.35" stroke-linejoin="round"/><path d="M6.200 14.200a1.900 1.900 0 0 0 3.600 0" fill="none" stroke="#fff" stroke-width="1.35"/></svg>
<div class="r" style="left:1226px;top:168px;width:80px;height:879px;background:#111111;box-shadow:-2px 0 4px -1px rgba(0,0,0,.7);"></div>
<svg class="r" style="left:1226px;top:168px;" width="80" height="879" viewBox="1226 168 80 879"><path d="M1242.3 169.5h4.2M1247.5 169.5h2.1M1250.6 169.5h3.1M1257.9 169.5h2.1M1242.3 171.5h8.3M1251.7 171.5h3.1M1242.3 173.5h8.3M1251.7 173.5h3.1M1242.3 175.5h8.3M1251.7 175.5h3.1M1242.3 179.5h3.1M1246.5 179.5h2.1M1265.2 179.5h8.3M1263.1 181.5h6.2M1238.2 185.5h1.0M1238.2 189.5h3.1M1250.6 189.5h7.3M1259.0 189.5h2.1M1238.2 191.5h1.0M1242.3 193.5h3.1M1253.8 193.5h3.1M1245.4 195.5h7.3M1257.9 195.5h2.1M1261.0 195.5h6.2M1242.3 197.5h9.4M1251.7 199.5h8.3M1261.0 199.5h4.2M1242.3 201.5h4.2M1247.5 201.5h5.2M1253.8 201.5h9.4M1242.3 203.5h6.2M1263.1 203.5h3.1M1265.2 205.5h7.3M1264.2 209.5h2.1M1267.3 209.5h4.2M1245.4 211.5h5.2M1238.2 213.5h1.0M1263.1 217.5h1.0M1238.2 219.5h1.0M1242.3 223.5h7.3M1250.6 223.5h9.4M1261.0 223.5h2.1M1264.2 223.5h7.3M1272.5 223.5h2.1M1275.6 223.5h3.1M1279.8 223.5h7.3M1288.1 223.5h7.3M1296.4 223.5h7.3M1304.7 223.5h0.3M1242.3 225.5h5.2M1259.0 225.5h2.1M1259.0 227.5h3.1M1242.3 229.5h3.1M1246.5 229.5h9.4M1256.9 229.5h4.2M1245.4 231.5h7.3M1242.3 233.5h7.3M1260.0 233.5h8.3M1242.3 235.5h4.2M1247.5 235.5h2.1M1250.6 235.5h9.4M1242.3 239.5h9.4M1266.2 239.5h2.1M1269.4 239.5h3.1M1249.6 241.5h6.2M1256.9 241.5h5.2M1238.2 243.5h1.0M1246.5 247.5h2.1M1249.6 247.5h4.2M1241.3 249.5h9.4M1251.7 249.5h2.1M1252.7 251.5h2.1M1234.0 253.5h1.0M1239.2 261.5h8.3M1248.6 261.5h8.3M1257.9 261.5h5.2M1271.4 261.5h8.3M1246.5 265.5h5.2M1252.7 265.5h4.2M1246.5 267.5h7.3M1246.5 269.5h9.4M1238.2 275.5h6.2M1245.4 275.5h9.4M1255.8 275.5h3.1M1260.0 275.5h9.4M1270.4 275.5h5.2M1276.6 275.5h8.3M1286.0 275.5h7.3M1261.0 279.5h6.2M1238.2 281.5h1.0M1252.7 283.5h2.1M1242.3 285.5h3.1M1246.5 285.5h3.1M1250.6 285.5h6.2M1257.9 285.5h2.1M1261.0 285.5h4.2M1242.3 287.5h6.2M1265.2 287.5h3.1M1242.3 289.5h6.2M1249.6 289.5h4.2M1254.8 289.5h3.1M1259.0 289.5h2.1M1262.1 289.5h6.2M1269.4 289.5h2.1M1245.4 295.5h6.2M1252.7 295.5h9.4M1242.3 297.5h1.0M1246.5 297.5h8.3M1255.8 297.5h4.2M1261.0 297.5h5.2M1267.3 297.5h4.2M1246.5 299.5h4.2M1266.2 299.5h1.0M1246.5 301.5h4.2M1251.7 301.5h7.3M1260.0 301.5h6.2M1267.3 301.5h2.1M1246.5 303.5h5.2M1255.8 305.5h5.2M1262.1 305.5h7.3M1275.6 305.5h2.1M1246.5 307.5h4.2M1255.8 307.5h8.3M1265.2 307.5h2.1M1255.8 309.5h4.2M1246.5 311.5h7.3M1264.2 311.5h4.2M1256.9 313.5h5.2M1263.1 313.5h2.1M1266.2 313.5h6.2M1253.8 315.5h5.2M1260.0 315.5h4.2M1274.6 315.5h3.1M1246.5 317.5h4.2M1251.7 317.5h8.3M1266.2 317.5h2.1M1269.4 317.5h5.2M1275.6 317.5h2.1M1278.7 317.5h4.2M1283.9 317.5h3.1M1256.9 319.5h2.1M1260.0 319.5h2.1M1269.4 319.5h6.2M1276.6 319.5h9.4M1287.0 319.5h3.1M1246.5 321.5h3.1M1265.2 321.5h5.2M1271.4 321.5h5.2M1288.1 321.5h6.2M1246.5 323.5h6.2M1253.8 323.5h5.2M1265.2 323.5h6.2M1279.8 323.5h4.2M1285.0 323.5h8.3M1246.5 325.5h6.2M1253.8 325.5h3.1M1257.9 325.5h5.2M1246.5 327.5h6.2M1253.8 327.5h9.4M1264.2 327.5h6.2M1246.5 329.5h6.2M1253.8 329.5h5.2M1264.2 329.5h3.1M1268.3 329.5h6.2M1246.5 331.5h6.2M1253.8 331.5h7.3M1262.1 331.5h9.4M1272.5 331.5h7.3M1242.3 333.5h1.0M1247.5 337.5h4.2M1252.7 337.5h9.4M1242.3 339.5h1.0M1246.5 341.5h6.2M1253.8 341.5h8.3M1263.1 341.5h8.3M1272.5 341.5h3.1M1276.6 341.5h2.1M1262.1 343.5h6.2M1278.7 345.5h1.0M1246.5 347.5h4.2M1259.0 347.5h7.3M1238.2 353.5h1.0M1234.0 357.5h1.0M1234.0 365.5h1.0M1238.2 367.5h8.3M1252.7 367.5h4.2M1238.2 369.5h5.2M1244.4 369.5h7.3M1252.7 369.5h8.3M1238.2 371.5h5.2M1244.4 371.5h3.1M1256.9 371.5h3.1M1261.0 371.5h2.1M1238.2 373.5h5.2M1244.4 373.5h8.3M1238.2 375.5h5.2M1244.4 375.5h6.2M1251.7 375.5h2.1M1262.1 375.5h1.0M1238.2 377.5h5.2M1244.4 377.5h6.2M1251.7 377.5h8.3M1261.0 377.5h2.1M1238.2 379.5h2.1M1241.3 379.5h2.1M1254.8 379.5h7.3M1247.5 381.5h9.4M1257.9 381.5h3.1M1234.0 383.5h1.0M1234.0 393.5h1.0M1246.5 395.5h2.1M1249.6 395.5h3.1M1246.5 397.5h2.1M1249.6 397.5h4.2M1254.8 397.5h2.1M1234.0 427.5h1.0M1239.2 433.5h8.3M1248.6 433.5h4.2M1253.8 433.5h9.4M1271.4 433.5h4.2M1276.6 433.5h7.3M1285.0 433.5h9.4M1300.6 433.5h4.4M1234.0 435.5h1.0M1238.2 437.5h9.4M1248.6 437.5h7.3M1256.9 437.5h7.3M1265.2 437.5h5.2M1238.2 439.5h5.2M1253.8 441.5h9.4M1267.3 441.5h3.1M1238.2 443.5h5.2M1244.4 443.5h4.2M1249.6 443.5h2.1M1252.7 443.5h4.2M1255.8 445.5h9.4M1266.2 445.5h4.2M1234.0 447.5h1.0M1250.6 455.5h6.2M1276.6 455.5h6.2M1289.1 455.5h10.4M1234.0 457.5h1.0M1245.4 459.5h3.1M1249.6 459.5h9.4M1238.2 461.5h8.3M1247.5 461.5h8.3M1256.9 461.5h9.4M1270.4 461.5h5.2M1238.2 465.5h7.3M1246.5 465.5h6.2M1253.8 465.5h2.1M1256.9 465.5h7.3M1245.4 467.5h9.4M1255.8 467.5h9.4M1266.2 467.5h2.1M1269.4 467.5h4.2M1274.6 467.5h2.1M1252.7 469.5h4.2M1270.4 469.5h7.3M1265.2 471.5h9.4M1275.6 471.5h2.1M1234.0 473.5h1.0M1234.0 481.5h1.0M1234.0 491.5h1.0M1262.1 497.5h3.1M1234.0 499.5h1.0M1243.4 501.5h8.3M1246.5 503.5h2.1M1249.6 503.5h1.0M1251.7 503.5h1.0M1253.8 503.5h2.1M1278.7 503.5h1.0M1280.8 503.5h1.0M1246.5 505.5h2.1M1249.6 505.5h1.0M1251.7 505.5h1.0M1253.8 505.5h3.1M1278.7 505.5h3.1M1246.5 507.5h3.1M1250.6 507.5h2.1M1253.8 507.5h3.1M1278.7 507.5h1.0M1280.8 507.5h2.1M1246.5 509.5h2.1M1249.6 509.5h1.0M1251.7 509.5h1.0M1253.8 509.5h1.0M1255.8 509.5h1.0M1278.7 509.5h1.0M1280.8 509.5h2.1M1246.5 511.5h3.1M1264.2 511.5h14.6M1293.3 511.5h11.7M1245.4 513.5h3.1M1234.0 515.5h1.0M1234.0 525.5h1.0M1244.4 547.5h4.2M1254.8 547.5h8.3M1298.5 547.5h6.5M1244.4 549.5h4.2M1249.6 549.5h3.1M1253.8 549.5h2.1M1256.9 549.5h2.1M1260.0 549.5h7.3M1245.4 553.5h5.2M1238.2 555.5h3.1M1242.3 555.5h9.4M1252.7 555.5h5.2M1259.0 555.5h6.2M1266.2 555.5h2.1M1270.4 559.5h3.1M1238.2 561.5h1.0M1242.3 563.5h7.3M1242.3 565.5h9.4M1242.3 567.5h4.2M1247.5 567.5h2.1M1250.6 567.5h3.1M1260.0 567.5h2.1M1245.4 571.5h2.1M1248.6 571.5h4.2M1253.8 571.5h2.1M1242.3 573.5h1.0M1246.5 575.5h5.2M1252.7 575.5h6.2M1260.0 575.5h11.4M1286.0 575.5h5.2M1292.2 575.5h5.2M1242.3 579.5h1.0M1257.9 581.5h3.1M1262.1 581.5h3.1M1242.3 583.5h1.0M1246.5 585.5h7.3M1254.8 585.5h10.4M1266.2 585.5h7.3M1274.6 585.5h11.4M1287.0 585.5h9.4M1297.4 585.5h1.0M1242.3 589.5h1.0M1238.2 593.5h1.0M1234.0 595.5h1.0M1234.0 601.5h1.0M1241.3 603.5h3.1M1269.4 603.5h6.2M1238.2 605.5h1.0M1249.6 607.5h2.1M1259.0 607.5h2.1M1254.8 609.5h7.3M1263.1 609.5h6.2M1242.3 613.5h5.2M1253.8 613.5h3.1M1242.3 617.5h4.2M1247.5 617.5h5.2M1267.3 617.5h4.2M1250.6 619.5h9.4M1263.1 623.5h5.2M1247.5 625.5h6.2M1252.7 627.5h2.1M1265.2 627.5h6.2M1247.5 631.5h8.3M1256.9 631.5h5.2M1242.3 633.5h3.1M1255.8 633.5h6.2M1242.3 637.5h8.3M1268.3 639.5h3.1M1272.5 639.5h2.1M1245.4 641.5h7.3M1264.2 641.5h4.2M1242.3 643.5h8.3M1254.8 643.5h3.1M1242.3 645.5h6.2M1249.6 645.5h5.2M1242.3 647.5h5.2M1254.8 647.5h7.3M1242.3 649.5h4.2M1255.8 649.5h6.2M1263.1 649.5h6.2M1270.4 649.5h4.2M1248.6 651.5h7.3M1256.9 651.5h9.4M1238.2 653.5h1.0M1241.3 659.5h8.3M1250.6 659.5h4.2M1255.8 659.5h9.4M1282.9 659.5h8.3M1302.6 659.5h2.4M1241.3 661.5h8.3M1272.5 661.5h8.3M1252.7 667.5h3.1M1238.2 669.5h1.0M1249.6 673.5h6.2M1252.7 675.5h7.3M1279.8 675.5h7.3M1288.1 675.5h9.4M1304.7 675.5h0.3M1246.5 681.5h5.2M1252.7 681.5h8.3M1262.1 681.5h8.3M1271.4 681.5h2.1M1274.6 681.5h6.2M1281.8 681.5h9.4M1246.5 689.5h4.2M1251.7 689.5h2.1M1254.8 689.5h2.1M1257.9 689.5h2.1M1261.0 689.5h2.1M1264.2 689.5h8.3M1273.5 689.5h9.4M1283.9 689.5h2.1M1287.0 689.5h4.2M1246.5 691.5h8.3M1260.0 691.5h5.2M1246.5 693.5h2.1M1249.6 693.5h3.1M1253.8 693.5h5.2M1274.6 693.5h3.1M1242.3 697.5h2.1M1253.8 697.5h9.4M1264.2 697.5h4.2M1269.4 697.5h3.1M1266.2 703.5h6.2M1273.5 703.5h5.2M1279.8 703.5h3.1M1245.4 705.5h9.4M1255.8 705.5h11.4M1268.3 705.5h7.3M1285.0 705.5h7.3M1293.3 705.5h6.2M1300.6 705.5h4.4M1245.4 707.5h7.3M1253.8 707.5h7.3M1262.1 707.5h9.4M1272.5 707.5h11.4M1285.0 707.5h6.2M1292.2 707.5h7.3M1300.6 707.5h1.0M1238.2 709.5h1.0M1241.3 713.5h9.4M1251.7 713.5h2.1M1238.2 715.5h1.0M1242.3 717.5h8.3M1242.3 721.5h8.3M1251.7 721.5h3.1M1255.8 721.5h3.1M1260.0 721.5h7.3M1238.2 737.5h1.0M1238.2 739.5h1.0M1242.3 745.5h12.5M1247.5 757.5h2.1M1238.2 759.5h6.2M1247.5 759.5h2.1M1238.2 761.5h6.2M1247.5 761.5h2.1M1238.2 763.5h6.2M1247.5 763.5h2.1M1234.0 765.5h1.0M1234.0 785.5h1.0M1234.0 787.5h1.0M1234.0 797.5h1.0M1234.0 799.5h1.0M1274.6 809.5h7.3M1282.9 809.5h8.3M1292.2 809.5h2.1M1234.0 811.5h1.0M1238.2 813.5h7.3M1238.2 815.5h6.2M1238.2 817.5h4.2M1243.4 817.5h2.1M1238.2 819.5h6.2M1238.2 821.5h4.2M1243.4 821.5h3.1M1244.4 825.5h4.2M1234.0 829.5h1.0M1267.3 837.5h5.2M1234.0 839.5h1.0M1246.5 843.5h8.3M1255.8 843.5h5.2M1262.1 843.5h3.1M1266.2 843.5h6.2M1238.2 845.5h4.2M1243.4 845.5h6.2M1253.8 845.5h7.3M1267.3 845.5h2.1M1270.4 845.5h1.0M1241.3 849.5h7.3M1249.6 849.5h1.0M1238.2 851.5h1.0M1242.3 853.5h3.1M1262.1 853.5h3.1M1289.1 853.5h6.2M1296.4 853.5h2.1M1299.5 853.5h4.2M1242.3 855.5h3.1M1262.1 855.5h6.2M1238.2 857.5h1.0M1238.2 861.5h1.0M1242.3 863.5h3.1M1266.2 863.5h3.1M1270.4 863.5h3.1M1279.8 863.5h2.1M1290.2 863.5h2.1M1293.3 863.5h4.2M1303.7 863.5h1.3M1242.3 865.5h3.1M1262.1 865.5h3.1M1270.4 865.5h6.2M1280.8 865.5h4.2M1286.0 865.5h6.2M1293.3 865.5h4.2M1298.5 865.5h5.2M1304.7 865.5h0.3M1242.3 867.5h3.1M1262.1 867.5h6.2M1238.2 869.5h1.0M1241.3 873.5h2.1M1244.4 873.5h3.1M1248.6 873.5h4.2M1255.8 873.5h3.1M1277.7 873.5h2.1M1241.3 877.5h2.1M1244.4 877.5h4.2M1249.6 877.5h3.1M1255.8 877.5h3.1M1277.7 877.5h2.1M1241.3 879.5h4.2M1246.5 879.5h4.2M1251.7 879.5h2.1M1255.8 879.5h3.1M1277.7 879.5h2.1M1241.3 881.5h2.1M1244.4 881.5h2.1M1247.5 881.5h2.1M1250.6 881.5h2.1M1255.8 881.5h3.1M1277.7 881.5h2.1M1238.2 885.5h3.1M1253.8 885.5h9.4M1264.2 885.5h3.1M1234.0 889.5h1.0M1250.6 901.5h2.1M1234.0 903.5h1.0M1238.2 905.5h6.2M1245.4 905.5h1.0M1247.5 905.5h8.3M1238.2 907.5h6.2M1245.4 907.5h1.0M1247.5 907.5h8.3M1238.2 909.5h6.2M1245.4 909.5h1.0M1247.5 909.5h8.3M1238.2 911.5h6.2M1245.4 911.5h1.0M1247.5 911.5h8.3M1238.2 913.5h6.2M1245.4 913.5h1.0M1247.5 913.5h8.3M1238.2 915.5h6.2M1245.4 915.5h1.0M1247.5 915.5h8.3M1238.2 917.5h6.2M1245.4 917.5h1.0M1247.5 917.5h8.3M1238.2 919.5h6.2M1245.4 919.5h1.0M1247.5 919.5h8.3M1238.2 921.5h6.2M1245.4 921.5h1.0M1247.5 921.5h8.3M1238.2 923.5h6.2M1245.4 923.5h1.0M1247.5 923.5h8.3M1234.0 925.5h1.0M1246.5 931.5h1.0M1247.5 931.5h1.0M1252.7 931.5h1.0M1263.1 931.5h2.1M1265.2 931.5h1.0M1276.6 931.5h2.1M1278.7 931.5h1.0M1289.1 931.5h4.2M1293.3 931.5h1.0M1234.0 933.5h1.0M1238.2 935.5h2.1M1241.3 935.5h1.0M1243.4 935.5h2.1M1245.4 935.5h1.0M1238.2 937.5h2.1M1241.3 937.5h1.0M1243.4 937.5h2.1M1245.4 937.5h1.0M1242.3 939.5h1.0M1243.4 939.5h1.0M1245.4 939.5h1.0M1246.5 939.5h1.0M1242.3 941.5h2.1M1245.4 941.5h1.0M1249.6 941.5h1.0M1242.3 943.5h2.1M1245.4 943.5h1.0M1249.6 943.5h1.0M1240.2 947.5h1.0M1241.3 947.5h4.2M1246.5 947.5h1.0M1247.5 947.5h1.0M1253.8 947.5h1.0M1255.8 947.5h1.0M1256.9 947.5h3.1M1260.0 947.5h1.0M1269.4 947.5h1.0M1270.4 947.5h2.1M1272.5 947.5h1.0M1274.6 947.5h2.1M1276.6 947.5h1.0M1279.8 947.5h1.0M1280.8 947.5h2.1M1283.9 947.5h1.0M1286.0 947.5h1.0M1289.1 947.5h1.0M1290.2 947.5h2.1M1293.3 947.5h1.0M1295.4 947.5h1.0M1297.4 947.5h4.2M1301.6 947.5h1.0M1302.6 947.5h1.0M1303.7 947.5h1.0M1247.5 951.5h2.1M1250.6 951.5h1.0M1252.7 951.5h6.2M1259.0 951.5h1.0M1247.5 953.5h2.1M1250.6 953.5h1.0M1252.7 953.5h5.2M1257.9 953.5h1.0M1238.2 957.5h1.0M1240.2 957.5h1.0M1242.3 957.5h2.1M1244.4 957.5h1.0M1246.5 957.5h1.0M1238.2 959.5h1.0M1240.2 959.5h1.0M1242.3 959.5h2.1M1244.4 959.5h1.0M1246.5 959.5h1.0M1241.3 963.5h1.0M1250.6 963.5h1.0M1252.7 963.5h1.0M1254.8 963.5h1.0M1256.9 963.5h1.0M1257.9 963.5h1.0M1261.0 963.5h1.0M1263.1 963.5h1.0M1264.2 963.5h1.0M1265.2 963.5h1.0M1266.2 963.5h1.0M1238.2 965.5h1.0M1242.3 967.5h3.1M1245.4 967.5h1.0M1246.5 967.5h1.0M1247.5 967.5h1.0M1248.6 967.5h1.0M1253.8 967.5h1.0M1254.8 967.5h1.0M1255.8 967.5h1.0M1257.9 967.5h1.0M1259.0 967.5h1.0M1261.0 967.5h2.1M1263.1 967.5h1.0M1265.2 967.5h2.1M1267.3 967.5h1.0M1270.4 967.5h1.0M1271.4 967.5h1.0M1242.3 969.5h3.1M1245.4 969.5h1.0M1246.5 969.5h1.0M1247.5 969.5h1.0M1248.6 969.5h1.0M1249.6 969.5h1.0M1250.6 969.5h1.0M1257.9 969.5h1.0M1259.0 969.5h1.0M1260.0 969.5h1.0M1261.0 969.5h1.0M1242.3 971.5h3.1M1245.4 971.5h1.0M1246.5 971.5h1.0M1247.5 971.5h1.0M1248.6 971.5h1.0M1256.9 971.5h1.0M1257.9 971.5h2.1M1260.0 971.5h1.0M1262.1 971.5h2.1M1264.2 971.5h1.0M1267.3 971.5h1.0M1268.3 971.5h1.0M1242.3 973.5h1.0M1244.4 973.5h1.0M1245.4 973.5h1.0M1247.5 973.5h2.1M1249.6 973.5h1.0M1251.7 973.5h1.0M1245.4 975.5h1.0M1246.5 975.5h1.0M1248.6 975.5h1.0M1250.6 975.5h1.0M1251.7 975.5h2.1M1254.8 975.5h1.0M1257.9 975.5h1.0M1259.0 975.5h2.1M1261.0 975.5h1.0M1262.1 975.5h1.0M1264.2 975.5h1.0M1265.2 975.5h1.0M1267.3 975.5h1.0M1269.4 975.5h2.1M1271.4 975.5h1.0M1273.5 975.5h1.0M1275.6 975.5h1.0M1277.7 975.5h1.0M1278.7 975.5h1.0M1280.8 975.5h2.1M1282.9 975.5h1.0M1285.0 975.5h1.0M1287.0 975.5h1.0M1238.2 977.5h1.0M1238.2 979.5h3.1M1241.3 979.5h1.0M1243.4 979.5h1.0M1244.4 979.5h1.0M1249.6 979.5h1.0M1250.6 979.5h1.0M1251.7 979.5h1.0M1253.8 979.5h1.0M1254.8 979.5h1.0M1256.9 979.5h2.1M1259.0 979.5h1.0M1261.0 979.5h2.1M1263.1 979.5h1.0M1266.2 979.5h1.0M1267.3 979.5h1.0M1271.4 979.5h3.1M1274.6 979.5h1.0M1276.6 979.5h1.0M1277.7 979.5h1.0M1278.7 979.5h1.0M1279.8 979.5h1.0M1283.9 979.5h1.0M1292.2 979.5h3.1M1295.4 979.5h1.0M1297.4 979.5h1.0M1298.5 979.5h1.0M1238.2 981.5h8.3M1246.5 981.5h1.0M1251.7 981.5h1.0M1252.7 981.5h1.0M1253.8 981.5h1.0M1255.8 981.5h1.0M1256.9 981.5h1.0M1259.0 981.5h2.1M1261.0 981.5h1.0M1263.1 981.5h2.1M1265.2 981.5h1.0M1268.3 981.5h1.0M1269.4 981.5h1.0M1272.5 981.5h8.3M1280.8 981.5h1.0M1281.8 981.5h1.0M1282.9 981.5h1.0M1287.0 981.5h1.0M1292.2 981.5h8.3M1300.6 981.5h1.0M1238.2 985.5h1.0M1240.2 985.5h1.0M1241.3 985.5h1.0M1243.4 985.5h2.1M1245.4 985.5h1.0M1247.5 985.5h1.0M1238.2 987.5h5.2M1243.4 987.5h1.0M1248.6 987.5h1.0M1249.6 987.5h1.0M1250.6 987.5h1.0M1252.7 987.5h1.0M1253.8 987.5h1.0M1255.8 987.5h2.1M1257.9 987.5h1.0M1260.0 987.5h2.1M1262.1 987.5h1.0M1265.2 987.5h1.0M1266.2 987.5h1.0M1271.4 987.5h5.2M1276.6 987.5h1.0M1277.7 987.5h1.0M1278.7 987.5h1.0M1283.9 987.5h1.0M1238.2 989.5h5.2M1243.4 989.5h1.0M1251.7 989.5h1.0M1252.7 989.5h2.1M1254.8 989.5h1.0M1256.9 989.5h2.1M1259.0 989.5h1.0M1262.1 989.5h1.0M1263.1 989.5h1.0M1234.0 991.5h1.0M1249.6 997.5h1.0M1250.6 997.5h1.0M1261.0 997.5h1.0M1262.1 997.5h1.0M1234.0 999.5h1.0M1241.3 1003.5h3.1M1245.4 1003.5h2.1M1248.6 1003.5h5.2M1254.8 1003.5h5.2M1261.0 1003.5h8.3M1270.4 1003.5h6.2M1277.7 1003.5h5.2M1293.3 1003.5h4.2M1298.5 1003.5h3.1M1302.6 1003.5h2.4M1238.2 1005.5h1.0M1250.6 1009.5h7.3M1259.0 1009.5h2.1M1262.1 1009.5h1.0M1260.0 1013.5h1.0M1262.1 1013.5h2.1M1269.4 1013.5h2.1M1242.3 1015.5h1.0M1270.4 1017.5h9.4M1280.8 1017.5h5.2M1287.0 1017.5h7.3M1295.4 1017.5h7.3M1303.7 1017.5h1.3M1242.3 1019.5h1.0M1242.3 1029.5h6.2M1249.6 1033.5h8.3M1238.2 1035.5h1.0M1234.0 1039.5h1.0" stroke="#9c9c9c" stroke-width="1" fill="none" opacity="0.85"/><path d="M1242.3 170.5h4.2M1247.5 170.5h2.1M1250.6 170.5h3.1M1257.9 170.5h2.1M1242.3 172.5h8.3M1251.7 172.5h3.1M1242.3 174.5h8.3M1251.7 174.5h3.1M1242.3 176.5h8.3M1251.7 176.5h3.1M1242.3 180.5h3.1M1246.5 180.5h2.1M1265.2 180.5h8.3M1263.1 182.5h6.2M1238.2 186.5h1.0M1238.2 190.5h3.1M1250.6 190.5h7.3M1259.0 190.5h2.1M1238.2 192.5h1.0M1242.3 194.5h3.1M1253.8 194.5h3.1M1245.4 196.5h7.3M1257.9 196.5h2.1M1261.0 196.5h6.2M1242.3 198.5h9.4M1251.7 200.5h8.3M1261.0 200.5h4.2M1242.3 202.5h4.2M1247.5 202.5h5.2M1253.8 202.5h9.4M1242.3 204.5h6.2M1263.1 204.5h3.1M1265.2 206.5h7.3M1264.2 210.5h2.1M1267.3 210.5h4.2M1245.4 212.5h5.2M1238.2 214.5h1.0M1263.1 218.5h1.0M1238.2 220.5h1.0M1242.3 224.5h7.3M1250.6 224.5h9.4M1261.0 224.5h2.1M1264.2 224.5h7.3M1272.5 224.5h2.1M1275.6 224.5h3.1M1279.8 224.5h7.3M1288.1 224.5h7.3M1296.4 224.5h7.3M1304.7 224.5h0.3M1242.3 226.5h5.2M1259.0 226.5h2.1M1259.0 228.5h3.1M1242.3 230.5h3.1M1246.5 230.5h9.4M1256.9 230.5h4.2M1245.4 232.5h7.3M1242.3 234.5h7.3M1260.0 234.5h8.3M1242.3 236.5h4.2M1247.5 236.5h2.1M1250.6 236.5h9.4M1242.3 240.5h9.4M1266.2 240.5h2.1M1269.4 240.5h3.1M1249.6 242.5h6.2M1256.9 242.5h5.2M1238.2 244.5h1.0M1246.5 248.5h2.1M1249.6 248.5h4.2M1241.3 250.5h9.4M1251.7 250.5h2.1M1252.7 252.5h2.1M1234.0 254.5h1.0M1239.2 262.5h8.3M1248.6 262.5h8.3M1257.9 262.5h5.2M1271.4 262.5h8.3M1246.5 266.5h5.2M1252.7 266.5h4.2M1246.5 268.5h7.3M1246.5 270.5h9.4M1238.2 276.5h6.2M1245.4 276.5h9.4M1255.8 276.5h3.1M1260.0 276.5h9.4M1270.4 276.5h5.2M1276.6 276.5h8.3M1286.0 276.5h7.3M1261.0 280.5h6.2M1238.2 282.5h1.0M1252.7 284.5h2.1M1242.3 286.5h3.1M1246.5 286.5h3.1M1250.6 286.5h6.2M1257.9 286.5h2.1M1261.0 286.5h4.2M1242.3 288.5h6.2M1265.2 288.5h3.1M1242.3 290.5h6.2M1249.6 290.5h4.2M1254.8 290.5h3.1M1259.0 290.5h2.1M1262.1 290.5h6.2M1269.4 290.5h2.1M1245.4 296.5h6.2M1252.7 296.5h9.4M1242.3 298.5h1.0M1246.5 298.5h8.3M1255.8 298.5h4.2M1261.0 298.5h5.2M1267.3 298.5h4.2M1246.5 300.5h4.2M1266.2 300.5h1.0M1246.5 302.5h4.2M1251.7 302.5h7.3M1260.0 302.5h6.2M1267.3 302.5h2.1M1246.5 304.5h5.2M1255.8 306.5h5.2M1262.1 306.5h7.3M1275.6 306.5h2.1M1246.5 308.5h4.2M1255.8 308.5h8.3M1265.2 308.5h2.1M1255.8 310.5h4.2M1246.5 312.5h7.3M1264.2 312.5h4.2M1256.9 314.5h5.2M1263.1 314.5h2.1M1266.2 314.5h6.2M1253.8 316.5h5.2M1260.0 316.5h4.2M1274.6 316.5h3.1M1246.5 318.5h4.2M1251.7 318.5h8.3M1266.2 318.5h2.1M1269.4 318.5h5.2M1275.6 318.5h2.1M1278.7 318.5h4.2M1283.9 318.5h3.1M1256.9 320.5h2.1M1260.0 320.5h2.1M1269.4 320.5h6.2M1276.6 320.5h9.4M1287.0 320.5h3.1M1246.5 322.5h3.1M1265.2 322.5h5.2M1271.4 322.5h5.2M1288.1 322.5h6.2M1246.5 324.5h6.2M1253.8 324.5h5.2M1265.2 324.5h6.2M1279.8 324.5h4.2M1285.0 324.5h8.3M1246.5 326.5h6.2M1253.8 326.5h3.1M1257.9 326.5h5.2M1246.5 328.5h6.2M1253.8 328.5h9.4M1264.2 328.5h6.2M1246.5 330.5h6.2M1253.8 330.5h5.2M1264.2 330.5h3.1M1268.3 330.5h6.2M1246.5 332.5h6.2M1253.8 332.5h7.3M1262.1 332.5h9.4M1272.5 332.5h7.3M1242.3 334.5h1.0M1247.5 338.5h4.2M1252.7 338.5h9.4M1242.3 340.5h1.0M1246.5 342.5h6.2M1253.8 342.5h8.3M1263.1 342.5h8.3M1272.5 342.5h3.1M1276.6 342.5h2.1M1262.1 344.5h6.2M1278.7 346.5h1.0M1246.5 348.5h4.2M1259.0 348.5h7.3M1238.2 354.5h1.0M1234.0 358.5h1.0M1234.0 366.5h1.0M1238.2 368.5h8.3M1252.7 368.5h4.2M1238.2 370.5h5.2M1244.4 370.5h7.3M1252.7 370.5h8.3M1238.2 372.5h5.2M1244.4 372.5h3.1M1256.9 372.5h3.1M1261.0 372.5h2.1M1238.2 374.5h5.2M1244.4 374.5h8.3M1238.2 376.5h5.2M1244.4 376.5h6.2M1251.7 376.5h2.1M1262.1 376.5h1.0M1238.2 378.5h5.2M1244.4 378.5h6.2M1251.7 378.5h8.3M1261.0 378.5h2.1M1238.2 380.5h2.1M1241.3 380.5h2.1M1254.8 380.5h7.3M1247.5 382.5h9.4M1257.9 382.5h3.1M1234.0 384.5h1.0M1234.0 394.5h1.0M1246.5 396.5h2.1M1249.6 396.5h3.1M1246.5 398.5h2.1M1249.6 398.5h4.2M1254.8 398.5h2.1M1234.0 428.5h1.0M1239.2 434.5h8.3M1248.6 434.5h4.2M1253.8 434.5h9.4M1271.4 434.5h4.2M1276.6 434.5h7.3M1285.0 434.5h9.4M1300.6 434.5h4.4M1234.0 436.5h1.0M1238.2 438.5h9.4M1248.6 438.5h7.3M1256.9 438.5h7.3M1265.2 438.5h5.2M1238.2 440.5h5.2M1253.8 442.5h9.4M1267.3 442.5h3.1M1238.2 444.5h5.2M1244.4 444.5h4.2M1249.6 444.5h2.1M1252.7 444.5h4.2M1255.8 446.5h9.4M1266.2 446.5h4.2M1234.0 448.5h1.0M1250.6 456.5h6.2M1276.6 456.5h6.2M1289.1 456.5h10.4M1234.0 458.5h1.0M1245.4 460.5h3.1M1249.6 460.5h9.4M1238.2 462.5h8.3M1247.5 462.5h8.3M1256.9 462.5h9.4M1270.4 462.5h5.2M1238.2 466.5h7.3M1246.5 466.5h6.2M1253.8 466.5h2.1M1256.9 466.5h7.3M1245.4 468.5h9.4M1255.8 468.5h9.4M1266.2 468.5h2.1M1269.4 468.5h4.2M1274.6 468.5h2.1M1252.7 470.5h4.2M1270.4 470.5h7.3M1265.2 472.5h9.4M1275.6 472.5h2.1M1234.0 474.5h1.0M1234.0 482.5h1.0M1234.0 492.5h1.0M1262.1 498.5h3.1M1234.0 500.5h1.0M1243.4 502.5h8.3M1246.5 504.5h2.1M1249.6 504.5h1.0M1251.7 504.5h1.0M1253.8 504.5h2.1M1278.7 504.5h1.0M1280.8 504.5h1.0M1246.5 506.5h2.1M1249.6 506.5h1.0M1251.7 506.5h1.0M1253.8 506.5h3.1M1278.7 506.5h3.1M1246.5 508.5h3.1M1250.6 508.5h2.1M1253.8 508.5h3.1M1278.7 508.5h1.0M1280.8 508.5h2.1M1246.5 510.5h2.1M1249.6 510.5h1.0M1251.7 510.5h1.0M1253.8 510.5h1.0M1255.8 510.5h1.0M1278.7 510.5h1.0M1280.8 510.5h2.1M1246.5 512.5h3.1M1264.2 512.5h14.6M1293.3 512.5h11.7M1245.4 514.5h3.1M1234.0 516.5h1.0M1234.0 526.5h1.0M1244.4 548.5h4.2M1254.8 548.5h8.3M1298.5 548.5h6.5M1244.4 550.5h4.2M1249.6 550.5h3.1M1253.8 550.5h2.1M1256.9 550.5h2.1M1260.0 550.5h7.3M1245.4 554.5h5.2M1238.2 556.5h3.1M1242.3 556.5h9.4M1252.7 556.5h5.2M1259.0 556.5h6.2M1266.2 556.5h2.1M1270.4 560.5h3.1M1238.2 562.5h1.0M1242.3 564.5h7.3M1242.3 566.5h9.4M1242.3 568.5h4.2M1247.5 568.5h2.1M1250.6 568.5h3.1M1260.0 568.5h2.1M1245.4 572.5h2.1M1248.6 572.5h4.2M1253.8 572.5h2.1M1242.3 574.5h1.0M1246.5 576.5h5.2M1252.7 576.5h6.2M1260.0 576.5h11.4M1286.0 576.5h5.2M1292.2 576.5h5.2M1242.3 580.5h1.0M1257.9 582.5h3.1M1262.1 582.5h3.1M1242.3 584.5h1.0M1246.5 586.5h7.3M1254.8 586.5h10.4M1266.2 586.5h7.3M1274.6 586.5h11.4M1287.0 586.5h9.4M1297.4 586.5h1.0M1242.3 590.5h1.0M1238.2 594.5h1.0M1234.0 596.5h1.0M1234.0 602.5h1.0M1241.3 604.5h3.1M1269.4 604.5h6.2M1238.2 606.5h1.0M1249.6 608.5h2.1M1259.0 608.5h2.1M1254.8 610.5h7.3M1263.1 610.5h6.2M1242.3 614.5h5.2M1253.8 614.5h3.1M1242.3 618.5h4.2M1247.5 618.5h5.2M1267.3 618.5h4.2M1250.6 620.5h9.4M1263.1 624.5h5.2M1247.5 626.5h6.2M1252.7 628.5h2.1M1265.2 628.5h6.2M1247.5 632.5h8.3M1256.9 632.5h5.2M1242.3 634.5h3.1M1255.8 634.5h6.2M1242.3 638.5h8.3M1268.3 640.5h3.1M1272.5 640.5h2.1M1245.4 642.5h7.3M1264.2 642.5h4.2M1242.3 644.5h8.3M1254.8 644.5h3.1M1242.3 646.5h6.2M1249.6 646.5h5.2M1242.3 648.5h5.2M1254.8 648.5h7.3M1242.3 650.5h4.2M1255.8 650.5h6.2M1263.1 650.5h6.2M1270.4 650.5h4.2M1248.6 652.5h7.3M1256.9 652.5h9.4M1238.2 654.5h1.0M1241.3 660.5h8.3M1250.6 660.5h4.2M1255.8 660.5h9.4M1282.9 660.5h8.3M1302.6 660.5h2.4M1241.3 662.5h8.3M1272.5 662.5h8.3M1252.7 668.5h3.1M1238.2 670.5h1.0M1249.6 674.5h6.2M1252.7 676.5h7.3M1279.8 676.5h7.3M1288.1 676.5h9.4M1304.7 676.5h0.3M1246.5 682.5h5.2M1252.7 682.5h8.3M1262.1 682.5h8.3M1271.4 682.5h2.1M1274.6 682.5h6.2M1281.8 682.5h9.4M1246.5 690.5h4.2M1251.7 690.5h2.1M1254.8 690.5h2.1M1257.9 690.5h2.1M1261.0 690.5h2.1M1264.2 690.5h8.3M1273.5 690.5h9.4M1283.9 690.5h2.1M1287.0 690.5h4.2M1246.5 692.5h8.3M1260.0 692.5h5.2M1246.5 694.5h2.1M1249.6 694.5h3.1M1253.8 694.5h5.2M1274.6 694.5h3.1M1242.3 698.5h2.1M1253.8 698.5h9.4M1264.2 698.5h4.2M1269.4 698.5h3.1M1266.2 704.5h6.2M1273.5 704.5h5.2M1279.8 704.5h3.1M1245.4 706.5h9.4M1255.8 706.5h11.4M1268.3 706.5h7.3M1285.0 706.5h7.3M1293.3 706.5h6.2M1300.6 706.5h4.4M1245.4 708.5h7.3M1253.8 708.5h7.3M1262.1 708.5h9.4M1272.5 708.5h11.4M1285.0 708.5h6.2M1292.2 708.5h7.3M1300.6 708.5h1.0M1238.2 710.5h1.0M1241.3 714.5h9.4M1251.7 714.5h2.1M1238.2 716.5h1.0M1242.3 718.5h8.3M1242.3 722.5h8.3M1251.7 722.5h3.1M1255.8 722.5h3.1M1260.0 722.5h7.3M1238.2 738.5h1.0M1238.2 740.5h1.0M1242.3 746.5h12.5M1247.5 758.5h2.1M1238.2 760.5h6.2M1247.5 760.5h2.1M1238.2 762.5h6.2M1247.5 762.5h2.1M1238.2 764.5h6.2M1247.5 764.5h2.1M1234.0 766.5h1.0M1234.0 786.5h1.0M1234.0 788.5h1.0M1234.0 798.5h1.0M1234.0 800.5h1.0M1274.6 810.5h7.3M1282.9 810.5h8.3M1292.2 810.5h2.1M1234.0 812.5h1.0M1238.2 814.5h7.3M1238.2 816.5h6.2M1238.2 818.5h4.2M1243.4 818.5h2.1M1238.2 820.5h6.2M1238.2 822.5h4.2M1243.4 822.5h3.1M1244.4 826.5h4.2M1234.0 830.5h1.0M1267.3 838.5h5.2M1234.0 840.5h1.0M1246.5 844.5h8.3M1255.8 844.5h5.2M1262.1 844.5h3.1M1266.2 844.5h6.2M1238.2 846.5h4.2M1243.4 846.5h6.2M1253.8 846.5h7.3M1267.3 846.5h2.1M1270.4 846.5h1.0M1241.3 850.5h7.3M1249.6 850.5h1.0M1238.2 852.5h1.0M1242.3 854.5h3.1M1262.1 854.5h3.1M1289.1 854.5h6.2M1296.4 854.5h2.1M1299.5 854.5h4.2M1242.3 856.5h3.1M1262.1 856.5h6.2M1238.2 858.5h1.0M1238.2 862.5h1.0M1242.3 864.5h3.1M1266.2 864.5h3.1M1270.4 864.5h3.1M1279.8 864.5h2.1M1290.2 864.5h2.1M1293.3 864.5h4.2M1303.7 864.5h1.3M1242.3 866.5h3.1M1262.1 866.5h3.1M1270.4 866.5h6.2M1280.8 866.5h4.2M1286.0 866.5h6.2M1293.3 866.5h4.2M1298.5 866.5h5.2M1304.7 866.5h0.3M1242.3 868.5h3.1M1262.1 868.5h6.2M1238.2 870.5h1.0M1241.3 874.5h2.1M1244.4 874.5h3.1M1248.6 874.5h4.2M1255.8 874.5h3.1M1277.7 874.5h2.1M1241.3 878.5h2.1M1244.4 878.5h4.2M1249.6 878.5h3.1M1255.8 878.5h3.1M1277.7 878.5h2.1M1241.3 880.5h4.2M1246.5 880.5h4.2M1251.7 880.5h2.1M1255.8 880.5h3.1M1277.7 880.5h2.1M1241.3 882.5h2.1M1244.4 882.5h2.1M1247.5 882.5h2.1M1250.6 882.5h2.1M1255.8 882.5h3.1M1277.7 882.5h2.1M1238.2 886.5h3.1M1253.8 886.5h9.4M1264.2 886.5h3.1M1234.0 890.5h1.0M1250.6 902.5h2.1M1234.0 904.5h1.0M1238.2 906.5h6.2M1245.4 906.5h1.0M1247.5 906.5h8.3M1238.2 908.5h6.2M1245.4 908.5h1.0M1247.5 908.5h8.3M1238.2 910.5h6.2M1245.4 910.5h1.0M1247.5 910.5h8.3M1238.2 912.5h6.2M1245.4 912.5h1.0M1247.5 912.5h8.3M1238.2 914.5h6.2M1245.4 914.5h1.0M1247.5 914.5h8.3M1238.2 916.5h6.2M1245.4 916.5h1.0M1247.5 916.5h8.3M1238.2 918.5h6.2M1245.4 918.5h1.0M1247.5 918.5h8.3M1238.2 920.5h6.2M1245.4 920.5h1.0M1247.5 920.5h8.3M1238.2 922.5h6.2M1245.4 922.5h1.0M1247.5 922.5h8.3M1238.2 924.5h6.2M1245.4 924.5h1.0M1247.5 924.5h8.3M1234.0 926.5h1.0M1246.5 932.5h1.0M1247.5 932.5h1.0M1252.7 932.5h1.0M1263.1 932.5h2.1M1265.2 932.5h1.0M1276.6 932.5h2.1M1278.7 932.5h1.0M1289.1 932.5h4.2M1293.3 932.5h1.0M1234.0 934.5h1.0M1238.2 936.5h2.1M1241.3 936.5h1.0M1243.4 936.5h2.1M1245.4 936.5h1.0M1238.2 938.5h2.1M1241.3 938.5h1.0M1243.4 938.5h2.1M1245.4 938.5h1.0M1242.3 940.5h1.0M1243.4 940.5h1.0M1245.4 940.5h1.0M1246.5 940.5h1.0M1242.3 942.5h2.1M1245.4 942.5h1.0M1249.6 942.5h1.0M1242.3 944.5h2.1M1245.4 944.5h1.0M1249.6 944.5h1.0M1240.2 948.5h1.0M1241.3 948.5h4.2M1246.5 948.5h1.0M1247.5 948.5h1.0M1253.8 948.5h1.0M1255.8 948.5h1.0M1256.9 948.5h3.1M1260.0 948.5h1.0M1269.4 948.5h1.0M1270.4 948.5h2.1M1272.5 948.5h1.0M1274.6 948.5h2.1M1276.6 948.5h1.0M1279.8 948.5h1.0M1280.8 948.5h2.1M1283.9 948.5h1.0M1286.0 948.5h1.0M1289.1 948.5h1.0M1290.2 948.5h2.1M1293.3 948.5h1.0M1295.4 948.5h1.0M1297.4 948.5h4.2M1301.6 948.5h1.0M1302.6 948.5h1.0M1303.7 948.5h1.0M1247.5 952.5h2.1M1250.6 952.5h1.0M1252.7 952.5h6.2M1259.0 952.5h1.0M1247.5 954.5h2.1M1250.6 954.5h1.0M1252.7 954.5h5.2M1257.9 954.5h1.0M1238.2 958.5h1.0M1240.2 958.5h1.0M1242.3 958.5h2.1M1244.4 958.5h1.0M1246.5 958.5h1.0M1238.2 960.5h1.0M1240.2 960.5h1.0M1242.3 960.5h2.1M1244.4 960.5h1.0M1246.5 960.5h1.0M1241.3 964.5h1.0M1250.6 964.5h1.0M1252.7 964.5h1.0M1254.8 964.5h1.0M1256.9 964.5h1.0M1257.9 964.5h1.0M1261.0 964.5h1.0M1263.1 964.5h1.0M1264.2 964.5h1.0M1265.2 964.5h1.0M1266.2 964.5h1.0M1238.2 966.5h1.0M1242.3 968.5h3.1M1245.4 968.5h1.0M1246.5 968.5h1.0M1247.5 968.5h1.0M1248.6 968.5h1.0M1253.8 968.5h1.0M1254.8 968.5h1.0M1255.8 968.5h1.0M1257.9 968.5h1.0M1259.0 968.5h1.0M1261.0 968.5h2.1M1263.1 968.5h1.0M1265.2 968.5h2.1M1267.3 968.5h1.0M1270.4 968.5h1.0M1271.4 968.5h1.0M1242.3 970.5h3.1M1245.4 970.5h1.0M1246.5 970.5h1.0M1247.5 970.5h1.0M1248.6 970.5h1.0M1249.6 970.5h1.0M1250.6 970.5h1.0M1257.9 970.5h1.0M1259.0 970.5h1.0M1260.0 970.5h1.0M1261.0 970.5h1.0M1242.3 972.5h3.1M1245.4 972.5h1.0M1246.5 972.5h1.0M1247.5 972.5h1.0M1248.6 972.5h1.0M1256.9 972.5h1.0M1257.9 972.5h2.1M1260.0 972.5h1.0M1262.1 972.5h2.1M1264.2 972.5h1.0M1267.3 972.5h1.0M1268.3 972.5h1.0M1242.3 974.5h1.0M1244.4 974.5h1.0M1245.4 974.5h1.0M1247.5 974.5h2.1M1249.6 974.5h1.0M1251.7 974.5h1.0M1245.4 976.5h1.0M1246.5 976.5h1.0M1248.6 976.5h1.0M1250.6 976.5h1.0M1251.7 976.5h2.1M1254.8 976.5h1.0M1257.9 976.5h1.0M1259.0 976.5h2.1M1261.0 976.5h1.0M1262.1 976.5h1.0M1264.2 976.5h1.0M1265.2 976.5h1.0M1267.3 976.5h1.0M1269.4 976.5h2.1M1271.4 976.5h1.0M1273.5 976.5h1.0M1275.6 976.5h1.0M1277.7 976.5h1.0M1278.7 976.5h1.0M1280.8 976.5h2.1M1282.9 976.5h1.0M1285.0 976.5h1.0M1287.0 976.5h1.0M1238.2 978.5h1.0M1238.2 980.5h3.1M1241.3 980.5h1.0M1243.4 980.5h1.0M1244.4 980.5h1.0M1249.6 980.5h1.0M1250.6 980.5h1.0M1251.7 980.5h1.0M1253.8 980.5h1.0M1254.8 980.5h1.0M1256.9 980.5h2.1M1259.0 980.5h1.0M1261.0 980.5h2.1M1263.1 980.5h1.0M1266.2 980.5h1.0M1267.3 980.5h1.0M1271.4 980.5h3.1M1274.6 980.5h1.0M1276.6 980.5h1.0M1277.7 980.5h1.0M1278.7 980.5h1.0M1279.8 980.5h1.0M1283.9 980.5h1.0M1292.2 980.5h3.1M1295.4 980.5h1.0M1297.4 980.5h1.0M1298.5 980.5h1.0M1238.2 982.5h8.3M1246.5 982.5h1.0M1251.7 982.5h1.0M1252.7 982.5h1.0M1253.8 982.5h1.0M1255.8 982.5h1.0M1256.9 982.5h1.0M1259.0 982.5h2.1M1261.0 982.5h1.0M1263.1 982.5h2.1M1265.2 982.5h1.0M1268.3 982.5h1.0M1269.4 982.5h1.0M1272.5 982.5h8.3M1280.8 982.5h1.0M1281.8 982.5h1.0M1282.9 982.5h1.0M1287.0 982.5h1.0M1292.2 982.5h8.3M1300.6 982.5h1.0M1238.2 986.5h1.0M1240.2 986.5h1.0M1241.3 986.5h1.0M1243.4 986.5h2.1M1245.4 986.5h1.0M1247.5 986.5h1.0M1238.2 988.5h5.2M1243.4 988.5h1.0M1248.6 988.5h1.0M1249.6 988.5h1.0M1250.6 988.5h1.0M1252.7 988.5h1.0M1253.8 988.5h1.0M1255.8 988.5h2.1M1257.9 988.5h1.0M1260.0 988.5h2.1M1262.1 988.5h1.0M1265.2 988.5h1.0M1266.2 988.5h1.0M1271.4 988.5h5.2M1276.6 988.5h1.0M1277.7 988.5h1.0M1278.7 988.5h1.0M1283.9 988.5h1.0M1238.2 990.5h5.2M1243.4 990.5h1.0M1251.7 990.5h1.0M1252.7 990.5h2.1M1254.8 990.5h1.0M1256.9 990.5h2.1M1259.0 990.5h1.0M1262.1 990.5h1.0M1263.1 990.5h1.0M1234.0 992.5h1.0M1249.6 998.5h1.0M1250.6 998.5h1.0M1261.0 998.5h1.0M1262.1 998.5h1.0M1234.0 1000.5h1.0M1241.3 1004.5h3.1M1245.4 1004.5h2.1M1248.6 1004.5h5.2M1254.8 1004.5h5.2M1261.0 1004.5h8.3M1270.4 1004.5h6.2M1277.7 1004.5h5.2M1293.3 1004.5h4.2M1298.5 1004.5h3.1M1302.6 1004.5h2.4M1238.2 1006.5h1.0M1250.6 1010.5h7.3M1259.0 1010.5h2.1M1262.1 1010.5h1.0M1260.0 1014.5h1.0M1262.1 1014.5h2.1M1269.4 1014.5h2.1M1242.3 1016.5h1.0M1270.4 1018.5h9.4M1280.8 1018.5h5.2M1287.0 1018.5h7.3M1295.4 1018.5h7.3M1303.7 1018.5h1.3M1242.3 1020.5h1.0M1242.3 1030.5h6.2M1249.6 1034.5h8.3M1238.2 1036.5h1.0M1234.0 1040.5h1.0" stroke="#9c9c9c" stroke-width="1" fill="none" opacity="0.38"/><path d="M1254.8 169.5h2.1M1249.6 179.5h5.2M1255.8 179.5h8.3M1242.3 181.5h7.3M1250.6 181.5h5.2M1256.9 181.5h5.2M1270.4 181.5h6.2M1242.3 183.5h9.4M1252.7 183.5h3.1M1256.9 183.5h8.3M1266.2 183.5h7.3M1274.6 183.5h4.2M1242.3 189.5h7.3M1257.9 197.5h8.3M1242.3 199.5h8.3M1254.8 203.5h7.3M1242.3 209.5h3.1M1246.5 209.5h9.4M1256.9 209.5h3.1M1261.0 209.5h2.1M1272.5 209.5h3.1M1242.3 211.5h2.1M1251.7 211.5h8.3M1261.0 211.5h6.2M1268.3 211.5h7.3M1276.6 211.5h3.1M1238.2 217.5h9.4M1248.6 217.5h9.4M1259.0 217.5h3.1M1248.6 225.5h9.4M1242.3 227.5h5.2M1248.6 227.5h9.4M1252.7 239.5h7.3M1261.0 239.5h4.2M1273.5 239.5h4.2M1278.7 239.5h1.0M1242.3 241.5h6.2M1263.1 241.5h7.3M1271.4 241.5h4.2M1238.2 245.5h7.3M1238.2 247.5h2.1M1238.2 249.5h2.1M1254.8 249.5h5.2M1255.8 251.5h5.2M1238.2 279.5h5.2M1244.4 279.5h7.3M1252.7 279.5h7.3M1242.3 283.5h9.4M1255.8 283.5h7.3M1264.2 283.5h4.2M1249.6 287.5h4.2M1254.8 287.5h9.4M1251.7 299.5h6.2M1259.0 299.5h6.2M1270.4 301.5h4.2M1252.7 303.5h3.1M1256.9 303.5h8.3M1266.2 303.5h8.3M1246.5 305.5h8.3M1251.7 307.5h3.1M1268.3 307.5h8.3M1246.5 309.5h5.2M1268.3 309.5h2.1M1271.4 309.5h4.2M1254.8 311.5h2.1M1257.9 311.5h5.2M1261.0 317.5h4.2M1246.5 319.5h9.4M1272.5 323.5h6.2M1292.2 325.5h1.0M1271.4 327.5h3.1M1260.0 329.5h3.1M1275.6 329.5h1.0M1255.8 345.5h7.3M1251.7 347.5h6.2M1267.3 347.5h7.3M1275.6 347.5h2.1M1285.0 347.5h2.1M1239.2 363.5h6.2M1246.5 363.5h6.2M1253.8 363.5h7.3M1262.1 363.5h3.1M1247.5 367.5h4.2M1257.9 367.5h5.2M1248.6 371.5h7.3M1253.8 373.5h8.3M1254.8 375.5h6.2M1244.4 379.5h9.4M1238.2 381.5h8.3M1239.2 391.5h5.2M1245.4 391.5h5.2M1251.7 391.5h8.3M1238.2 401.5h6.2M1245.4 401.5h8.3M1254.8 401.5h9.4M1265.2 401.5h2.1M1238.2 423.5h6.2M1245.4 423.5h9.4M1255.8 423.5h8.3M1265.2 423.5h2.1M1250.6 439.5h5.2M1256.9 439.5h9.4M1248.6 441.5h4.2M1238.2 445.5h3.1M1242.3 445.5h7.3M1268.3 459.5h5.2M1267.3 461.5h2.1M1282.9 465.5h1.0M1238.2 467.5h6.2M1246.5 469.5h5.2M1267.3 469.5h2.1M1255.8 471.5h8.3M1239.2 479.5h7.3M1247.5 479.5h8.3M1256.9 479.5h3.1M1241.3 497.5h8.3M1250.6 497.5h10.4M1239.2 523.5h8.3M1248.6 523.5h9.4M1259.0 523.5h1.0M1238.2 527.5h12.5M1238.2 547.5h5.2M1264.2 547.5h5.2M1270.4 547.5h7.3M1242.3 559.5h7.3M1250.6 559.5h2.1M1253.8 559.5h8.3M1263.1 559.5h6.2M1274.6 559.5h4.2M1279.8 559.5h4.2M1250.6 563.5h8.3M1260.0 563.5h3.1M1252.7 565.5h2.1M1255.8 565.5h5.2M1262.1 565.5h5.2M1254.8 567.5h4.2M1272.5 575.5h5.2M1278.7 575.5h6.2M1250.6 581.5h6.2M1266.2 581.5h6.2M1273.5 581.5h2.1M1239.2 599.5h4.2M1245.4 603.5h9.4M1255.8 603.5h2.1M1259.0 603.5h5.2M1265.2 603.5h3.1M1252.7 607.5h5.2M1262.1 607.5h7.3M1270.4 607.5h1.0M1249.6 609.5h4.2M1270.4 609.5h3.1M1248.6 613.5h4.2M1257.9 613.5h3.1M1262.1 613.5h6.2M1242.3 615.5h8.3M1251.7 615.5h8.3M1261.0 615.5h7.3M1269.4 615.5h2.1M1253.8 617.5h4.2M1259.0 617.5h7.3M1242.3 619.5h7.3M1261.0 619.5h6.2M1268.3 619.5h4.2M1242.3 621.5h5.2M1248.6 621.5h6.2M1255.8 621.5h4.2M1261.0 621.5h5.2M1267.3 621.5h5.2M1242.3 623.5h7.3M1250.6 623.5h6.2M1257.9 623.5h4.2M1242.3 625.5h4.2M1254.8 625.5h6.2M1262.1 625.5h3.1M1266.2 625.5h1.0M1242.3 627.5h9.4M1255.8 627.5h8.3M1242.3 631.5h4.2M1246.5 633.5h8.3M1251.7 637.5h9.4M1262.1 637.5h8.3M1271.4 637.5h1.0M1242.3 639.5h9.4M1252.7 639.5h2.1M1255.8 639.5h5.2M1262.1 639.5h5.2M1242.3 641.5h2.1M1253.8 641.5h9.4M1269.4 641.5h3.1M1273.5 641.5h2.1M1251.7 643.5h2.1M1259.0 643.5h8.3M1268.3 643.5h4.2M1255.8 645.5h9.4M1266.2 645.5h4.2M1248.6 647.5h5.2M1263.1 647.5h6.2M1247.5 649.5h7.3M1275.6 649.5h1.0M1242.3 651.5h5.2M1267.3 651.5h3.1M1271.4 651.5h2.1M1242.3 677.5h14.6M1242.3 701.5h8.3M1251.7 701.5h6.2M1268.3 721.5h14.6M1283.9 721.5h9.4M1243.4 743.5h8.3M1242.3 749.5h22.9M1238.2 757.5h6.2M1248.6 783.5h14.6M1254.8 795.5h22.9M1251.7 809.5h14.6M1244.4 827.5h6.2M1251.7 837.5h14.6M1250.6 845.5h2.1M1262.1 845.5h4.2M1242.3 885.5h10.4M1243.4 901.5h7.3M1248.6 931.5h4.2M1249.6 947.5h4.2M1261.0 947.5h8.3M1249.6 967.5h4.2M1249.6 971.5h7.3M1245.4 979.5h4.2M1299.5 979.5h5.5M1247.5 981.5h4.2M1301.6 981.5h3.4M1244.4 987.5h4.2M1244.4 989.5h7.3M1251.7 997.5h9.4M1246.5 1017.5h22.9M1249.6 1029.5h6.2" stroke="#3d7fa8" stroke-width="1" fill="none" opacity="0.85"/><path d="M1254.8 170.5h2.1M1249.6 180.5h5.2M1255.8 180.5h8.3M1242.3 182.5h7.3M1250.6 182.5h5.2M1256.9 182.5h5.2M1270.4 182.5h6.2M1242.3 184.5h9.4M1252.7 184.5h3.1M1256.9 184.5h8.3M1266.2 184.5h7.3M1274.6 184.5h4.2M1242.3 190.5h7.3M1257.9 198.5h8.3M1242.3 200.5h8.3M1254.8 204.5h7.3M1242.3 210.5h3.1M1246.5 210.5h9.4M1256.9 210.5h3.1M1261.0 210.5h2.1M1272.5 210.5h3.1M1242.3 212.5h2.1M1251.7 212.5h8.3M1261.0 212.5h6.2M1268.3 212.5h7.3M1276.6 212.5h3.1M1238.2 218.5h9.4M1248.6 218.5h9.4M1259.0 218.5h3.1M1248.6 226.5h9.4M1242.3 228.5h5.2M1248.6 228.5h9.4M1252.7 240.5h7.3M1261.0 240.5h4.2M1273.5 240.5h4.2M1278.7 240.5h1.0M1242.3 242.5h6.2M1263.1 242.5h7.3M1271.4 242.5h4.2M1238.2 246.5h7.3M1238.2 248.5h2.1M1238.2 250.5h2.1M1254.8 250.5h5.2M1255.8 252.5h5.2M1238.2 280.5h5.2M1244.4 280.5h7.3M1252.7 280.5h7.3M1242.3 284.5h9.4M1255.8 284.5h7.3M1264.2 284.5h4.2M1249.6 288.5h4.2M1254.8 288.5h9.4M1251.7 300.5h6.2M1259.0 300.5h6.2M1270.4 302.5h4.2M1252.7 304.5h3.1M1256.9 304.5h8.3M1266.2 304.5h8.3M1246.5 306.5h8.3M1251.7 308.5h3.1M1268.3 308.5h8.3M1246.5 310.5h5.2M1268.3 310.5h2.1M1271.4 310.5h4.2M1254.8 312.5h2.1M1257.9 312.5h5.2M1261.0 318.5h4.2M1246.5 320.5h9.4M1272.5 324.5h6.2M1292.2 326.5h1.0M1271.4 328.5h3.1M1260.0 330.5h3.1M1275.6 330.5h1.0M1255.8 346.5h7.3M1251.7 348.5h6.2M1267.3 348.5h7.3M1275.6 348.5h2.1M1285.0 348.5h2.1M1239.2 364.5h6.2M1246.5 364.5h6.2M1253.8 364.5h7.3M1262.1 364.5h3.1M1247.5 368.5h4.2M1257.9 368.5h5.2M1248.6 372.5h7.3M1253.8 374.5h8.3M1254.8 376.5h6.2M1244.4 380.5h9.4M1238.2 382.5h8.3M1239.2 392.5h5.2M1245.4 392.5h5.2M1251.7 392.5h8.3M1238.2 402.5h6.2M1245.4 402.5h8.3M1254.8 402.5h9.4M1265.2 402.5h2.1M1238.2 424.5h6.2M1245.4 424.5h9.4M1255.8 424.5h8.3M1265.2 424.5h2.1M1250.6 440.5h5.2M1256.9 440.5h9.4M1248.6 442.5h4.2M1238.2 446.5h3.1M1242.3 446.5h7.3M1268.3 460.5h5.2M1267.3 462.5h2.1M1282.9 466.5h1.0M1238.2 468.5h6.2M1246.5 470.5h5.2M1267.3 470.5h2.1M1255.8 472.5h8.3M1239.2 480.5h7.3M1247.5 480.5h8.3M1256.9 480.5h3.1M1241.3 498.5h8.3M1250.6 498.5h10.4M1239.2 524.5h8.3M1248.6 524.5h9.4M1259.0 524.5h1.0M1238.2 528.5h12.5M1238.2 548.5h5.2M1264.2 548.5h5.2M1270.4 548.5h7.3M1242.3 560.5h7.3M1250.6 560.5h2.1M1253.8 560.5h8.3M1263.1 560.5h6.2M1274.6 560.5h4.2M1279.8 560.5h4.2M1250.6 564.5h8.3M1260.0 564.5h3.1M1252.7 566.5h2.1M1255.8 566.5h5.2M1262.1 566.5h5.2M1254.8 568.5h4.2M1272.5 576.5h5.2M1278.7 576.5h6.2M1250.6 582.5h6.2M1266.2 582.5h6.2M1273.5 582.5h2.1M1239.2 600.5h4.2M1245.4 604.5h9.4M1255.8 604.5h2.1M1259.0 604.5h5.2M1265.2 604.5h3.1M1252.7 608.5h5.2M1262.1 608.5h7.3M1270.4 608.5h1.0M1249.6 610.5h4.2M1270.4 610.5h3.1M1248.6 614.5h4.2M1257.9 614.5h3.1M1262.1 614.5h6.2M1242.3 616.5h8.3M1251.7 616.5h8.3M1261.0 616.5h7.3M1269.4 616.5h2.1M1253.8 618.5h4.2M1259.0 618.5h7.3M1242.3 620.5h7.3M1261.0 620.5h6.2M1268.3 620.5h4.2M1242.3 622.5h5.2M1248.6 622.5h6.2M1255.8 622.5h4.2M1261.0 622.5h5.2M1267.3 622.5h5.2M1242.3 624.5h7.3M1250.6 624.5h6.2M1257.9 624.5h4.2M1242.3 626.5h4.2M1254.8 626.5h6.2M1262.1 626.5h3.1M1266.2 626.5h1.0M1242.3 628.5h9.4M1255.8 628.5h8.3M1242.3 632.5h4.2M1246.5 634.5h8.3M1251.7 638.5h9.4M1262.1 638.5h8.3M1271.4 638.5h1.0M1242.3 640.5h9.4M1252.7 640.5h2.1M1255.8 640.5h5.2M1262.1 640.5h5.2M1242.3 642.5h2.1M1253.8 642.5h9.4M1269.4 642.5h3.1M1273.5 642.5h2.1M1251.7 644.5h2.1M1259.0 644.5h8.3M1268.3 644.5h4.2M1255.8 646.5h9.4M1266.2 646.5h4.2M1248.6 648.5h5.2M1263.1 648.5h6.2M1247.5 650.5h7.3M1275.6 650.5h1.0M1242.3 652.5h5.2M1267.3 652.5h3.1M1271.4 652.5h2.1M1242.3 678.5h14.6M1242.3 702.5h8.3M1251.7 702.5h6.2M1268.3 722.5h14.6M1283.9 722.5h9.4M1243.4 744.5h8.3M1242.3 750.5h22.9M1238.2 758.5h6.2M1248.6 784.5h14.6M1254.8 796.5h22.9M1251.7 810.5h14.6M1244.4 828.5h6.2M1251.7 838.5h14.6M1250.6 846.5h2.1M1262.1 846.5h4.2M1242.3 886.5h10.4M1243.4 902.5h7.3M1248.6 932.5h4.2M1249.6 948.5h4.2M1261.0 948.5h8.3M1249.6 968.5h4.2M1249.6 972.5h7.3M1245.4 980.5h4.2M1299.5 980.5h5.5M1247.5 982.5h4.2M1301.6 982.5h3.4M1244.4 988.5h4.2M1244.4 990.5h7.3M1251.7 998.5h9.4M1246.5 1018.5h22.9M1249.6 1030.5h6.2" stroke="#3d7fa8" stroke-width="1" fill="none" opacity="0.38"/><path d="M1234.0 261.5h4.2M1242.3 295.5h2.1M1242.3 337.5h4.2M1234.0 363.5h4.2M1234.0 391.5h4.2M1234.0 433.5h4.2M1271.4 437.5h3.1M1238.2 441.5h9.4M1264.2 441.5h2.1M1250.6 445.5h4.2M1234.0 455.5h4.2M1265.2 465.5h6.2M1272.5 465.5h3.1M1276.6 465.5h5.2M1238.2 469.5h7.3M1257.9 469.5h8.3M1238.2 471.5h3.1M1242.3 471.5h6.2M1249.6 471.5h5.2M1234.0 479.5h4.2M1238.2 501.5h4.2M1238.2 513.5h6.2M1234.0 523.5h4.2M1238.2 559.5h3.1M1242.3 571.5h2.1M1246.5 577.5h6.2M1242.3 581.5h7.3M1246.5 587.5h6.2M1234.0 599.5h4.2M1238.2 603.5h2.1M1238.2 659.5h2.1M1238.2 661.5h2.1M1238.2 667.5h2.1M1242.3 675.5h3.1M1246.5 675.5h5.2M1261.0 675.5h9.4M1271.4 675.5h7.3M1298.5 675.5h5.2M1242.3 681.5h3.1M1242.3 689.5h3.1M1242.3 691.5h3.1M1242.3 693.5h3.1M1242.3 703.5h2.1M1242.3 705.5h2.1M1242.3 707.5h2.1M1238.2 713.5h2.1M1234.0 743.5h6.2M1234.0 753.5h6.2M1234.0 809.5h4.2M1234.0 837.5h4.2M1238.2 849.5h2.1M1238.2 859.5h4.2M1238.2 873.5h2.1M1238.2 877.5h2.1M1238.2 879.5h2.1M1238.2 881.5h2.1M1234.0 931.5h4.2M1238.2 939.5h3.1M1238.2 941.5h3.1M1238.2 943.5h3.1M1238.2 947.5h2.1M1238.2 963.5h3.1M1242.3 975.5h2.1M1238.2 1003.5h2.1M1242.3 1013.5h3.1M1242.3 1033.5h6.2M1238.2 1037.5h6.2" stroke="#b8681f" stroke-width="1" fill="none" opacity="0.85"/><path d="M1234.0 262.5h4.2M1242.3 296.5h2.1M1242.3 338.5h4.2M1234.0 364.5h4.2M1234.0 392.5h4.2M1234.0 434.5h4.2M1271.4 438.5h3.1M1238.2 442.5h9.4M1264.2 442.5h2.1M1250.6 446.5h4.2M1234.0 456.5h4.2M1265.2 466.5h6.2M1272.5 466.5h3.1M1276.6 466.5h5.2M1238.2 470.5h7.3M1257.9 470.5h8.3M1238.2 472.5h3.1M1242.3 472.5h6.2M1249.6 472.5h5.2M1234.0 480.5h4.2M1238.2 502.5h4.2M1238.2 514.5h6.2M1234.0 524.5h4.2M1238.2 560.5h3.1M1242.3 572.5h2.1M1246.5 578.5h6.2M1242.3 582.5h7.3M1246.5 588.5h6.2M1234.0 600.5h4.2M1238.2 604.5h2.1M1238.2 660.5h2.1M1238.2 662.5h2.1M1238.2 668.5h2.1M1242.3 676.5h3.1M1246.5 676.5h5.2M1261.0 676.5h9.4M1271.4 676.5h7.3M1298.5 676.5h5.2M1242.3 682.5h3.1M1242.3 690.5h3.1M1242.3 692.5h3.1M1242.3 694.5h3.1M1242.3 704.5h2.1M1242.3 706.5h2.1M1242.3 708.5h2.1M1238.2 714.5h2.1M1234.0 744.5h6.2M1234.0 754.5h6.2M1234.0 810.5h4.2M1234.0 838.5h4.2M1238.2 850.5h2.1M1238.2 860.5h4.2M1238.2 874.5h2.1M1238.2 878.5h2.1M1238.2 880.5h2.1M1238.2 882.5h2.1M1234.0 932.5h4.2M1238.2 940.5h3.1M1238.2 942.5h3.1M1238.2 944.5h3.1M1238.2 948.5h2.1M1238.2 964.5h3.1M1242.3 976.5h2.1M1238.2 1004.5h2.1M1242.3 1014.5h3.1M1242.3 1034.5h6.2M1238.2 1038.5h6.2" stroke="#b8681f" stroke-width="1" fill="none" opacity="0.38"/><path d="M1246.5 245.5h8.3M1255.8 245.5h4.2M1241.3 247.5h4.2M1254.8 247.5h7.3M1238.2 251.5h3.1M1242.3 251.5h9.4M1270.4 305.5h4.2M1252.7 309.5h2.1M1261.0 309.5h6.2M1269.4 311.5h6.2M1244.4 439.5h5.2M1267.3 439.5h2.1M1257.9 443.5h9.4M1238.2 459.5h6.2M1260.0 459.5h7.3M1274.6 459.5h7.3M1282.9 459.5h2.1M1249.6 547.5h4.2M1278.7 547.5h8.3M1288.1 547.5h9.4M1241.3 667.5h4.2M1246.5 667.5h5.2M1242.3 671.5h5.2M1255.8 691.5h3.1M1266.2 691.5h2.1M1260.0 693.5h4.2M1265.2 693.5h2.1M1268.3 693.5h5.2M1245.4 697.5h7.3M1273.5 697.5h4.2M1245.4 703.5h6.2M1252.7 703.5h6.2M1260.0 703.5h2.1M1251.7 717.5h3.1M1266.2 853.5h6.2M1273.5 853.5h3.1M1277.7 853.5h6.2M1285.0 853.5h3.1M1262.1 863.5h3.1M1274.6 863.5h4.2M1282.9 863.5h6.2M1298.5 863.5h4.2M1266.2 865.5h3.1M1277.7 865.5h2.1M1283.9 1003.5h8.3M1254.8 1013.5h2.1M1257.9 1013.5h1.0M1265.2 1013.5h3.1" stroke="#b4b42c" stroke-width="1" fill="none" opacity="0.85"/><path d="M1246.5 246.5h8.3M1255.8 246.5h4.2M1241.3 248.5h4.2M1254.8 248.5h7.3M1238.2 252.5h3.1M1242.3 252.5h9.4M1270.4 306.5h4.2M1252.7 310.5h2.1M1261.0 310.5h6.2M1269.4 312.5h6.2M1244.4 440.5h5.2M1267.3 440.5h2.1M1257.9 444.5h9.4M1238.2 460.5h6.2M1260.0 460.5h7.3M1274.6 460.5h7.3M1282.9 460.5h2.1M1249.6 548.5h4.2M1278.7 548.5h8.3M1288.1 548.5h9.4M1241.3 668.5h4.2M1246.5 668.5h5.2M1242.3 672.5h5.2M1255.8 692.5h3.1M1266.2 692.5h2.1M1260.0 694.5h4.2M1265.2 694.5h2.1M1268.3 694.5h5.2M1245.4 698.5h7.3M1273.5 698.5h4.2M1245.4 704.5h6.2M1252.7 704.5h6.2M1260.0 704.5h2.1M1251.7 718.5h3.1M1266.2 854.5h6.2M1273.5 854.5h3.1M1277.7 854.5h6.2M1285.0 854.5h3.1M1262.1 864.5h3.1M1274.6 864.5h4.2M1282.9 864.5h6.2M1298.5 864.5h4.2M1266.2 866.5h3.1M1277.7 866.5h2.1M1283.9 1004.5h8.3M1254.8 1014.5h2.1M1257.9 1014.5h1.0M1265.2 1014.5h3.1" stroke="#b4b42c" stroke-width="1" fill="none" opacity="0.38"/><path d="M1265.2 171.5h4.2M1270.4 171.5h8.3M1279.8 171.5h3.1M1283.9 171.5h4.2M1289.1 171.5h5.2M1238.2 273.5h3.1M1242.3 273.5h8.3M1251.7 273.5h5.2M1257.9 273.5h3.1M1262.1 273.5h5.2M1246.5 343.5h8.3M1255.8 343.5h5.2M1269.4 343.5h7.3M1246.5 345.5h8.3M1264.2 345.5h6.2M1271.4 345.5h6.2M1278.7 347.5h5.2M1242.3 351.5h9.4M1252.7 351.5h6.2M1260.0 351.5h2.1M1263.1 351.5h4.2M1268.3 351.5h5.2M1238.2 531.5h3.1M1242.3 531.5h7.3M1250.6 531.5h7.3M1259.0 531.5h9.4M1269.4 531.5h2.1M1272.5 531.5h3.1M1276.6 531.5h3.1M1280.8 531.5h8.3M1290.2 531.5h2.1M1293.3 531.5h2.1M1238.2 533.5h9.4M1248.6 533.5h4.2M1253.8 533.5h3.1M1257.9 533.5h6.2M1265.2 533.5h7.3M1273.5 533.5h9.4M1283.9 533.5h6.2M1291.2 533.5h5.2M1238.2 535.5h5.2M1244.4 535.5h7.3M1252.7 535.5h5.2M1259.0 535.5h8.3M1268.3 535.5h6.2M1275.6 535.5h8.3M1285.0 535.5h6.2M1292.2 535.5h2.1M1295.4 535.5h9.4M1238.2 537.5h6.2M1245.4 537.5h7.3M1253.8 537.5h7.3M1262.1 537.5h3.1M1266.2 537.5h5.2M1272.5 537.5h2.1M1275.6 537.5h6.2M1282.9 537.5h7.3M1291.2 537.5h2.1M1294.3 537.5h4.2M1299.5 537.5h4.2M1238.2 539.5h7.3M1246.5 539.5h4.2M1251.7 539.5h5.2M1257.9 539.5h2.1M1261.0 539.5h2.1M1264.2 539.5h6.2M1271.4 539.5h7.3M1279.8 539.5h8.3M1289.1 539.5h4.2M1294.3 539.5h7.3M1302.6 539.5h2.4M1238.2 541.5h9.4M1248.6 541.5h3.1M1252.7 541.5h6.2M1260.0 541.5h6.2M1267.3 541.5h2.1M1270.4 541.5h9.4M1280.8 541.5h5.2M1287.0 541.5h2.1M1290.2 541.5h2.1M1293.3 541.5h3.1M1234.0 543.5h2.1M1277.7 581.5h6.2M1285.0 581.5h7.3M1234.0 657.5h8.3M1243.4 657.5h3.1M1247.5 657.5h4.2M1252.7 657.5h2.1M1255.8 657.5h5.2M1262.1 657.5h6.2M1269.4 657.5h3.1M1273.5 657.5h5.2M1279.8 657.5h9.4M1290.2 657.5h4.2M1295.4 657.5h7.3M1294.3 681.5h7.3M1302.6 681.5h2.4M1242.3 683.5h9.4M1252.7 683.5h7.3M1261.0 683.5h7.3M1269.4 683.5h4.2M1274.6 683.5h2.1M1277.7 683.5h8.3M1287.0 683.5h8.3M1296.4 683.5h3.1M1300.6 683.5h2.1M1303.7 683.5h1.0M1242.3 685.5h8.3M1251.7 685.5h3.1M1255.8 685.5h2.1M1259.0 685.5h4.2M1264.2 685.5h4.2M1269.4 685.5h8.3M1278.7 685.5h2.1M1281.8 685.5h4.2M1287.0 685.5h6.2M1279.8 693.5h7.3M1288.1 693.5h3.1M1292.2 693.5h9.4M1302.6 693.5h2.4M1234.0 695.5h2.1M1242.3 695.5h2.1M1245.4 695.5h2.1M1248.6 695.5h3.1M1252.7 695.5h6.2M1260.0 695.5h4.2M1238.2 725.5h2.1M1242.3 727.5h5.2M1248.6 727.5h3.1M1252.7 727.5h6.2M1260.0 727.5h6.2M1242.3 729.5h4.2M1247.5 729.5h2.1M1250.6 729.5h7.3M1259.0 729.5h7.3M1267.3 729.5h3.1M1242.3 731.5h2.1M1245.4 731.5h6.2M1252.7 731.5h3.1M1256.9 731.5h5.2M1263.1 731.5h5.2M1242.3 733.5h8.3M1251.7 733.5h9.4M1262.1 733.5h5.2M1242.3 735.5h7.3M1250.6 735.5h4.2M1255.8 735.5h3.1M1260.0 735.5h2.1M1263.1 735.5h7.3M1271.4 735.5h9.4M1281.8 735.5h8.3M1291.2 735.5h3.1M1295.4 735.5h5.2M1267.3 749.5h3.1M1271.4 749.5h4.2M1276.6 749.5h4.2M1281.8 749.5h5.2M1288.1 749.5h4.2M1293.3 749.5h6.2M1300.6 749.5h2.1M1303.7 749.5h1.3M1238.2 773.5h3.1M1242.3 773.5h7.3M1250.6 773.5h5.2M1256.9 773.5h9.4M1267.3 773.5h9.4M1277.7 773.5h7.3M1286.0 773.5h8.3M1295.4 773.5h7.3M1303.7 773.5h1.3M1234.0 781.5h9.4M1244.4 781.5h4.2M1234.0 793.5h9.4M1244.4 793.5h2.1M1247.5 793.5h1.0M1238.2 841.5h2.1M1241.3 841.5h9.4M1251.7 841.5h3.1M1255.8 841.5h3.1M1238.2 871.5h7.3M1246.5 871.5h7.3M1254.8 871.5h2.1M1257.9 871.5h3.1M1262.1 871.5h9.4M1272.5 871.5h4.2M1277.7 871.5h5.2M1283.9 871.5h5.2M1238.2 895.5h3.1M1242.3 895.5h4.2M1247.5 895.5h5.2M1253.8 895.5h1.0M1295.4 931.5h2.1M1298.5 931.5h2.1M1301.6 931.5h3.4M1251.7 941.5h2.1M1254.8 941.5h6.2M1262.1 941.5h1.0M1264.2 941.5h5.2M1270.4 941.5h6.2M1251.7 943.5h2.1M1254.8 943.5h6.2M1262.1 943.5h1.0M1264.2 943.5h5.2M1270.4 943.5h6.2M1238.2 1001.5h2.1M1241.3 1001.5h4.2M1246.5 1001.5h3.1M1250.6 1001.5h7.3M1259.0 1001.5h2.1M1262.1 1001.5h6.2M1257.9 1029.5h3.1M1262.1 1029.5h6.2M1269.4 1029.5h9.4M1279.8 1029.5h9.4M1290.2 1029.5h4.2M1295.4 1029.5h8.3M1304.7 1029.5h0.3M1238.2 1045.5h3.1M1242.3 1045.5h9.4M1252.7 1045.5h8.3M1262.1 1045.5h7.3M1270.4 1045.5h6.2M1277.7 1045.5h9.4M1288.1 1045.5h2.1M1291.2 1045.5h7.3M1299.5 1045.5h1.0" stroke="#5e5e5e" stroke-width="1" fill="none" opacity="0.85"/><path d="M1265.2 172.5h4.2M1270.4 172.5h8.3M1279.8 172.5h3.1M1283.9 172.5h4.2M1289.1 172.5h5.2M1238.2 274.5h3.1M1242.3 274.5h8.3M1251.7 274.5h5.2M1257.9 274.5h3.1M1262.1 274.5h5.2M1246.5 344.5h8.3M1255.8 344.5h5.2M1269.4 344.5h7.3M1246.5 346.5h8.3M1264.2 346.5h6.2M1271.4 346.5h6.2M1278.7 348.5h5.2M1242.3 352.5h9.4M1252.7 352.5h6.2M1260.0 352.5h2.1M1263.1 352.5h4.2M1268.3 352.5h5.2M1238.2 532.5h3.1M1242.3 532.5h7.3M1250.6 532.5h7.3M1259.0 532.5h9.4M1269.4 532.5h2.1M1272.5 532.5h3.1M1276.6 532.5h3.1M1280.8 532.5h8.3M1290.2 532.5h2.1M1293.3 532.5h2.1M1238.2 534.5h9.4M1248.6 534.5h4.2M1253.8 534.5h3.1M1257.9 534.5h6.2M1265.2 534.5h7.3M1273.5 534.5h9.4M1283.9 534.5h6.2M1291.2 534.5h5.2M1238.2 536.5h5.2M1244.4 536.5h7.3M1252.7 536.5h5.2M1259.0 536.5h8.3M1268.3 536.5h6.2M1275.6 536.5h8.3M1285.0 536.5h6.2M1292.2 536.5h2.1M1295.4 536.5h9.4M1238.2 538.5h6.2M1245.4 538.5h7.3M1253.8 538.5h7.3M1262.1 538.5h3.1M1266.2 538.5h5.2M1272.5 538.5h2.1M1275.6 538.5h6.2M1282.9 538.5h7.3M1291.2 538.5h2.1M1294.3 538.5h4.2M1299.5 538.5h4.2M1238.2 540.5h7.3M1246.5 540.5h4.2M1251.7 540.5h5.2M1257.9 540.5h2.1M1261.0 540.5h2.1M1264.2 540.5h6.2M1271.4 540.5h7.3M1279.8 540.5h8.3M1289.1 540.5h4.2M1294.3 540.5h7.3M1302.6 540.5h2.4M1238.2 542.5h9.4M1248.6 542.5h3.1M1252.7 542.5h6.2M1260.0 542.5h6.2M1267.3 542.5h2.1M1270.4 542.5h9.4M1280.8 542.5h5.2M1287.0 542.5h2.1M1290.2 542.5h2.1M1293.3 542.5h3.1M1234.0 544.5h2.1M1277.7 582.5h6.2M1285.0 582.5h7.3M1234.0 658.5h8.3M1243.4 658.5h3.1M1247.5 658.5h4.2M1252.7 658.5h2.1M1255.8 658.5h5.2M1262.1 658.5h6.2M1269.4 658.5h3.1M1273.5 658.5h5.2M1279.8 658.5h9.4M1290.2 658.5h4.2M1295.4 658.5h7.3M1294.3 682.5h7.3M1302.6 682.5h2.4M1242.3 684.5h9.4M1252.7 684.5h7.3M1261.0 684.5h7.3M1269.4 684.5h4.2M1274.6 684.5h2.1M1277.7 684.5h8.3M1287.0 684.5h8.3M1296.4 684.5h3.1M1300.6 684.5h2.1M1303.7 684.5h1.0M1242.3 686.5h8.3M1251.7 686.5h3.1M1255.8 686.5h2.1M1259.0 686.5h4.2M1264.2 686.5h4.2M1269.4 686.5h8.3M1278.7 686.5h2.1M1281.8 686.5h4.2M1287.0 686.5h6.2M1279.8 694.5h7.3M1288.1 694.5h3.1M1292.2 694.5h9.4M1302.6 694.5h2.4M1234.0 696.5h2.1M1242.3 696.5h2.1M1245.4 696.5h2.1M1248.6 696.5h3.1M1252.7 696.5h6.2M1260.0 696.5h4.2M1238.2 726.5h2.1M1242.3 728.5h5.2M1248.6 728.5h3.1M1252.7 728.5h6.2M1260.0 728.5h6.2M1242.3 730.5h4.2M1247.5 730.5h2.1M1250.6 730.5h7.3M1259.0 730.5h7.3M1267.3 730.5h3.1M1242.3 732.5h2.1M1245.4 732.5h6.2M1252.7 732.5h3.1M1256.9 732.5h5.2M1263.1 732.5h5.2M1242.3 734.5h8.3M1251.7 734.5h9.4M1262.1 734.5h5.2M1242.3 736.5h7.3M1250.6 736.5h4.2M1255.8 736.5h3.1M1260.0 736.5h2.1M1263.1 736.5h7.3M1271.4 736.5h9.4M1281.8 736.5h8.3M1291.2 736.5h3.1M1295.4 736.5h5.2M1267.3 750.5h3.1M1271.4 750.5h4.2M1276.6 750.5h4.2M1281.8 750.5h5.2M1288.1 750.5h4.2M1293.3 750.5h6.2M1300.6 750.5h2.1M1303.7 750.5h1.3M1238.2 774.5h3.1M1242.3 774.5h7.3M1250.6 774.5h5.2M1256.9 774.5h9.4M1267.3 774.5h9.4M1277.7 774.5h7.3M1286.0 774.5h8.3M1295.4 774.5h7.3M1303.7 774.5h1.3M1234.0 782.5h9.4M1244.4 782.5h4.2M1234.0 794.5h9.4M1244.4 794.5h2.1M1247.5 794.5h1.0M1238.2 842.5h2.1M1241.3 842.5h9.4M1251.7 842.5h3.1M1255.8 842.5h3.1M1238.2 872.5h7.3M1246.5 872.5h7.3M1254.8 872.5h2.1M1257.9 872.5h3.1M1262.1 872.5h9.4M1272.5 872.5h4.2M1277.7 872.5h5.2M1283.9 872.5h5.2M1238.2 896.5h3.1M1242.3 896.5h4.2M1247.5 896.5h5.2M1253.8 896.5h1.0M1295.4 932.5h2.1M1298.5 932.5h2.1M1301.6 932.5h3.4M1251.7 942.5h2.1M1254.8 942.5h6.2M1262.1 942.5h1.0M1264.2 942.5h5.2M1270.4 942.5h6.2M1251.7 944.5h2.1M1254.8 944.5h6.2M1262.1 944.5h1.0M1264.2 944.5h5.2M1270.4 944.5h6.2M1238.2 1002.5h2.1M1241.3 1002.5h4.2M1246.5 1002.5h3.1M1250.6 1002.5h7.3M1259.0 1002.5h2.1M1262.1 1002.5h6.2M1257.9 1030.5h3.1M1262.1 1030.5h6.2M1269.4 1030.5h9.4M1279.8 1030.5h9.4M1290.2 1030.5h4.2M1295.4 1030.5h8.3M1304.7 1030.5h0.3M1238.2 1046.5h3.1M1242.3 1046.5h9.4M1252.7 1046.5h8.3M1262.1 1046.5h7.3M1270.4 1046.5h6.2M1277.7 1046.5h9.4M1288.1 1046.5h2.1M1291.2 1046.5h7.3M1299.5 1046.5h1.0" stroke="#5e5e5e" stroke-width="1" fill="none" opacity="0.38"/><path d="M1246.5 193.5h6.2M1257.9 193.5h6.2M1265.2 193.5h6.2M1242.3 195.5h2.1M1253.8 195.5h3.1M1268.3 195.5h1.0M1252.7 197.5h4.2M1267.3 197.5h3.1M1249.6 203.5h4.2M1242.3 205.5h8.3M1251.7 205.5h8.3M1261.0 205.5h3.1M1262.1 225.5h2.1M1242.3 231.5h2.1M1253.8 231.5h3.1M1257.9 231.5h5.2M1264.2 231.5h1.0M1250.6 233.5h8.3M1253.8 501.5h1.0M1255.8 501.5h1.0M1257.9 501.5h1.0M1260.0 501.5h1.0M1262.1 501.5h1.0M1264.2 501.5h1.0M1266.2 501.5h1.0M1268.3 501.5h1.0M1270.4 501.5h1.0M1272.5 501.5h1.0M1274.6 501.5h1.0M1276.6 501.5h1.0M1278.7 501.5h1.0M1280.8 501.5h1.0M1282.9 501.5h1.0M1285.0 501.5h1.0M1287.0 501.5h1.0M1289.1 501.5h1.0M1291.2 501.5h1.0M1293.3 501.5h1.0M1295.4 501.5h1.0M1297.4 501.5h1.0M1299.5 501.5h1.0M1301.6 501.5h1.0M1303.7 501.5h1.0M1280.8 979.5h3.1M1283.9 981.5h3.1M1279.8 987.5h4.2" stroke="#7a50b0" stroke-width="1" fill="none" opacity="0.85"/><path d="M1246.5 194.5h6.2M1257.9 194.5h6.2M1265.2 194.5h6.2M1242.3 196.5h2.1M1253.8 196.5h3.1M1268.3 196.5h1.0M1252.7 198.5h4.2M1267.3 198.5h3.1M1249.6 204.5h4.2M1242.3 206.5h8.3M1251.7 206.5h8.3M1261.0 206.5h3.1M1262.1 226.5h2.1M1242.3 232.5h2.1M1253.8 232.5h3.1M1257.9 232.5h5.2M1264.2 232.5h1.0M1250.6 234.5h8.3M1253.8 502.5h1.0M1255.8 502.5h1.0M1257.9 502.5h1.0M1260.0 502.5h1.0M1262.1 502.5h1.0M1264.2 502.5h1.0M1266.2 502.5h1.0M1268.3 502.5h1.0M1270.4 502.5h1.0M1272.5 502.5h1.0M1274.6 502.5h1.0M1276.6 502.5h1.0M1278.7 502.5h1.0M1280.8 502.5h1.0M1282.9 502.5h1.0M1285.0 502.5h1.0M1287.0 502.5h1.0M1289.1 502.5h1.0M1291.2 502.5h1.0M1293.3 502.5h1.0M1295.4 502.5h1.0M1297.4 502.5h1.0M1299.5 502.5h1.0M1301.6 502.5h1.0M1303.7 502.5h1.0M1280.8 980.5h3.1M1283.9 982.5h3.1M1279.8 988.5h4.2" stroke="#7a50b0" stroke-width="1" fill="none" opacity="0.38"/><path d="M1264.2 261.5h6.2M1280.8 261.5h7.3M1238.2 265.5h7.3M1238.2 267.5h7.3M1238.2 269.5h7.3M1273.5 313.5h4.2M1278.7 313.5h1.0M1263.1 319.5h5.2M1277.7 321.5h9.4M1274.6 325.5h6.2M1281.8 325.5h9.4M1238.2 395.5h7.3M1238.2 397.5h7.3M1264.2 433.5h6.2M1295.4 433.5h4.2M1239.2 455.5h10.4M1257.9 455.5h5.2M1264.2 455.5h4.2M1269.4 455.5h6.2M1283.9 455.5h4.2M1300.6 455.5h4.4M1234.0 497.5h6.2M1238.2 503.5h7.3M1238.2 505.5h7.3M1238.2 507.5h7.3M1238.2 509.5h7.3M1238.2 511.5h7.3M1250.6 511.5h12.5M1279.8 511.5h12.5M1238.2 549.5h5.2M1238.2 553.5h6.2M1242.3 607.5h6.2M1242.3 609.5h6.2M1263.1 631.5h8.3M1272.5 631.5h3.1M1263.1 633.5h8.3M1272.5 633.5h8.3M1242.3 673.5h6.2M1263.1 703.5h2.1M1234.0 783.5h14.6M1234.0 795.5h20.8M1239.2 809.5h12.5M1267.3 809.5h6.2M1295.4 809.5h8.3M1304.7 809.5h0.3M1238.2 825.5h5.2M1238.2 827.5h5.2M1239.2 837.5h12.5M1273.5 837.5h10.4M1285.0 837.5h8.3M1294.3 837.5h10.4M1238.2 843.5h7.3M1234.0 901.5h7.3M1239.2 931.5h7.3M1253.8 931.5h8.3M1267.3 931.5h8.3M1280.8 931.5h7.3M1238.2 951.5h8.3M1238.2 953.5h8.3M1242.3 963.5h7.3M1251.7 969.5h6.2M1234.0 997.5h7.3M1242.3 997.5h7.3M1242.3 1009.5h7.3M1246.5 1013.5h7.3" stroke="#27d45c" stroke-width="1" fill="none" opacity="0.85"/><path d="M1264.2 262.5h6.2M1280.8 262.5h7.3M1238.2 266.5h7.3M1238.2 268.5h7.3M1238.2 270.5h7.3M1273.5 314.5h4.2M1278.7 314.5h1.0M1263.1 320.5h5.2M1277.7 322.5h9.4M1274.6 326.5h6.2M1281.8 326.5h9.4M1238.2 396.5h7.3M1238.2 398.5h7.3M1264.2 434.5h6.2M1295.4 434.5h4.2M1239.2 456.5h10.4M1257.9 456.5h5.2M1264.2 456.5h4.2M1269.4 456.5h6.2M1283.9 456.5h4.2M1300.6 456.5h4.4M1234.0 498.5h6.2M1238.2 504.5h7.3M1238.2 506.5h7.3M1238.2 508.5h7.3M1238.2 510.5h7.3M1238.2 512.5h7.3M1250.6 512.5h12.5M1279.8 512.5h12.5M1238.2 550.5h5.2M1238.2 554.5h6.2M1242.3 608.5h6.2M1242.3 610.5h6.2M1263.1 632.5h8.3M1272.5 632.5h3.1M1263.1 634.5h8.3M1272.5 634.5h8.3M1242.3 674.5h6.2M1263.1 704.5h2.1M1234.0 784.5h14.6M1234.0 796.5h20.8M1239.2 810.5h12.5M1267.3 810.5h6.2M1295.4 810.5h8.3M1304.7 810.5h0.3M1238.2 826.5h5.2M1238.2 828.5h5.2M1239.2 838.5h12.5M1273.5 838.5h10.4M1285.0 838.5h8.3M1294.3 838.5h10.4M1238.2 844.5h7.3M1234.0 902.5h7.3M1239.2 932.5h7.3M1253.8 932.5h8.3M1267.3 932.5h8.3M1280.8 932.5h7.3M1238.2 952.5h8.3M1238.2 954.5h8.3M1242.3 964.5h7.3M1251.7 970.5h6.2M1234.0 998.5h7.3M1242.3 998.5h7.3M1242.3 1010.5h7.3M1246.5 1014.5h7.3" stroke="#27d45c" stroke-width="1" fill="none" opacity="0.38"/><path d="M1246.5 313.5h9.4M1246.5 315.5h6.2M1265.2 315.5h8.3M1250.6 321.5h9.4M1261.0 321.5h3.1M1260.0 323.5h4.2M1264.2 325.5h9.4M1257.9 483.5h3.1M1262.1 483.5h3.1M1266.2 483.5h3.1M1257.9 485.5h2.1M1261.0 485.5h3.1M1265.2 485.5h3.1M1269.4 485.5h1.0M1257.9 487.5h2.1M1261.0 487.5h3.1M1265.2 487.5h3.1M1269.4 487.5h1.0M1257.9 489.5h3.1M1262.1 489.5h2.1M1265.2 489.5h3.1M1269.4 489.5h1.0M1257.9 503.5h18.7M1257.9 505.5h18.7M1257.9 507.5h18.7M1257.9 509.5h18.7M1266.2 659.5h5.2M1272.5 659.5h9.4M1292.2 659.5h9.4M1250.6 661.5h6.2M1257.9 661.5h5.2M1264.2 661.5h7.3M1281.8 661.5h5.2M1254.8 713.5h4.2M1256.9 745.5h5.2M1244.4 757.5h2.1M1244.4 759.5h2.1M1244.4 761.5h2.1M1244.4 763.5h2.1M1247.5 941.5h2.1M1247.5 943.5h2.1M1278.7 947.5h1.0M1285.0 947.5h1.0M1288.1 947.5h1.0M1294.3 947.5h1.0M1245.4 957.5h1.0M1245.4 959.5h1.0M1253.8 963.5h1.0M1259.0 963.5h2.1M1269.4 967.5h1.0M1266.2 971.5h1.0M1250.6 973.5h1.0M1256.9 975.5h1.0M1272.5 975.5h1.0M1283.9 975.5h1.0M1242.3 979.5h1.0M1265.2 979.5h1.0M1275.6 979.5h1.0M1296.4 979.5h1.0M1267.3 981.5h1.0M1246.5 985.5h1.0M1264.2 987.5h1.0M1261.0 989.5h1.0M1266.2 1023.5h10.4M1277.7 1023.5h10.4M1294.3 1025.5h5.2M1300.6 1025.5h4.4M1248.6 1027.5h3.1M1245.4 1037.5h3.1" stroke="#d6d628" stroke-width="1" fill="none" opacity="0.85"/><path d="M1246.5 314.5h9.4M1246.5 316.5h6.2M1265.2 316.5h8.3M1250.6 322.5h9.4M1261.0 322.5h3.1M1260.0 324.5h4.2M1264.2 326.5h9.4M1257.9 484.5h3.1M1262.1 484.5h3.1M1266.2 484.5h3.1M1257.9 486.5h2.1M1261.0 486.5h3.1M1265.2 486.5h3.1M1269.4 486.5h1.0M1257.9 488.5h2.1M1261.0 488.5h3.1M1265.2 488.5h3.1M1269.4 488.5h1.0M1257.9 490.5h3.1M1262.1 490.5h2.1M1265.2 490.5h3.1M1269.4 490.5h1.0M1257.9 504.5h18.7M1257.9 506.5h18.7M1257.9 508.5h18.7M1257.9 510.5h18.7M1266.2 660.5h5.2M1272.5 660.5h9.4M1292.2 660.5h9.4M1250.6 662.5h6.2M1257.9 662.5h5.2M1264.2 662.5h7.3M1281.8 662.5h5.2M1254.8 714.5h4.2M1256.9 746.5h5.2M1244.4 758.5h2.1M1244.4 760.5h2.1M1244.4 762.5h2.1M1244.4 764.5h2.1M1247.5 942.5h2.1M1247.5 944.5h2.1M1278.7 948.5h1.0M1285.0 948.5h1.0M1288.1 948.5h1.0M1294.3 948.5h1.0M1245.4 958.5h1.0M1245.4 960.5h1.0M1253.8 964.5h1.0M1259.0 964.5h2.1M1269.4 968.5h1.0M1266.2 972.5h1.0M1250.6 974.5h1.0M1256.9 976.5h1.0M1272.5 976.5h1.0M1283.9 976.5h1.0M1242.3 980.5h1.0M1265.2 980.5h1.0M1275.6 980.5h1.0M1296.4 980.5h1.0M1267.3 982.5h1.0M1246.5 986.5h1.0M1264.2 988.5h1.0M1261.0 990.5h1.0M1266.2 1024.5h10.4M1277.7 1024.5h10.4M1294.3 1026.5h5.2M1300.6 1026.5h4.4M1248.6 1028.5h3.1M1245.4 1038.5h3.1" stroke="#d6d628" stroke-width="1" fill="none" opacity="0.38"/><path d="M1238.2 405.5h20.8M1238.2 407.5h20.8M1238.2 409.5h20.8M1238.2 411.5h20.8M1238.2 413.5h20.8M1238.2 415.5h20.8M1238.2 417.5h20.8M1238.2 419.5h20.8M1238.2 483.5h18.7M1238.2 485.5h18.7M1238.2 487.5h18.7M1238.2 489.5h18.7M1276.6 705.5h7.3M1246.5 853.5h14.6M1246.5 855.5h14.6M1246.5 863.5h14.6M1246.5 865.5h14.6M1246.5 867.5h14.6M1260.0 873.5h16.6M1260.0 877.5h16.6M1260.0 879.5h16.6M1260.0 881.5h16.6M1242.3 1023.5h22.9M1242.3 1025.5h22.9M1242.3 1027.5h6.2" stroke="#3f90c8" stroke-width="1" fill="none" opacity="0.85"/><path d="M1238.2 406.5h20.8M1238.2 408.5h20.8M1238.2 410.5h20.8M1238.2 412.5h20.8M1238.2 414.5h20.8M1238.2 416.5h20.8M1238.2 418.5h20.8M1238.2 420.5h20.8M1238.2 484.5h18.7M1238.2 486.5h18.7M1238.2 488.5h18.7M1238.2 490.5h18.7M1276.6 706.5h7.3M1246.5 854.5h14.6M1246.5 856.5h14.6M1246.5 864.5h14.6M1246.5 866.5h14.6M1246.5 868.5h14.6M1260.0 874.5h16.6M1260.0 878.5h16.6M1260.0 880.5h16.6M1260.0 882.5h16.6M1242.3 1024.5h22.9M1242.3 1026.5h22.9M1242.3 1028.5h6.2" stroke="#3f90c8" stroke-width="1" fill="none" opacity="0.38"/><path d="M1260.0 405.5h13.5M1260.0 407.5h13.5M1260.0 409.5h13.5M1260.0 411.5h13.5M1260.0 413.5h13.5M1260.0 415.5h13.5M1260.0 417.5h13.5M1260.0 419.5h13.5M1272.5 483.5h5.2M1278.7 483.5h6.2M1286.0 483.5h1.0M1272.5 485.5h4.2M1277.7 485.5h3.1M1281.8 485.5h3.1M1286.0 485.5h1.0M1272.5 487.5h4.2M1277.7 487.5h3.1M1281.8 487.5h5.2M1272.5 489.5h5.2M1278.7 489.5h3.1M1282.9 489.5h4.2M1252.7 527.5h7.3M1261.0 527.5h7.3M1269.4 527.5h7.3M1277.7 527.5h6.2M1285.0 527.5h7.3M1293.3 527.5h6.2M1300.6 527.5h4.4M1259.0 677.5h4.2M1264.2 677.5h6.2M1271.4 677.5h7.3M1279.8 677.5h5.2M1286.0 677.5h5.2M1292.2 677.5h5.2M1298.5 677.5h4.2M1303.7 677.5h1.3M1289.1 1023.5h10.4M1300.6 1023.5h4.4M1266.2 1025.5h7.3M1274.6 1025.5h9.4M1285.0 1025.5h8.3" stroke="#c4c4c4" stroke-width="1" fill="none" opacity="0.85"/><path d="M1260.0 406.5h13.5M1260.0 408.5h13.5M1260.0 410.5h13.5M1260.0 412.5h13.5M1260.0 414.5h13.5M1260.0 416.5h13.5M1260.0 418.5h13.5M1260.0 420.5h13.5M1272.5 484.5h5.2M1278.7 484.5h6.2M1286.0 484.5h1.0M1272.5 486.5h4.2M1277.7 486.5h3.1M1281.8 486.5h3.1M1286.0 486.5h1.0M1272.5 488.5h4.2M1277.7 488.5h3.1M1281.8 488.5h5.2M1272.5 490.5h5.2M1278.7 490.5h3.1M1282.9 490.5h4.2M1252.7 528.5h7.3M1261.0 528.5h7.3M1269.4 528.5h7.3M1277.7 528.5h6.2M1285.0 528.5h7.3M1293.3 528.5h6.2M1300.6 528.5h4.4M1259.0 678.5h4.2M1264.2 678.5h6.2M1271.4 678.5h7.3M1279.8 678.5h5.2M1286.0 678.5h5.2M1292.2 678.5h5.2M1298.5 678.5h4.2M1303.7 678.5h1.3M1289.1 1024.5h10.4M1300.6 1024.5h4.4M1266.2 1026.5h7.3M1274.6 1026.5h9.4M1285.0 1026.5h8.3" stroke="#c4c4c4" stroke-width="1" fill="none" opacity="0.38"/></svg>
<div class="r" style="left:1234px;top:770px;width:71px;height:1px;background:#4a4a4a;"></div>
<div class="r" style="left:1234px;top:776px;width:71px;height:1px;background:#4a4a4a;"></div>
<div class="r" style="left:1234px;top:892px;width:71px;height:1px;background:#4a4a4a;"></div>
<div class="r" style="left:1234px;top:897px;width:71px;height:1px;background:#4a4a4a;"></div>
<div class="r" style="left:1234px;top:1043px;width:71px;height:1px;background:#4a4a4a;"></div>
<div class="r" style="left:1304px;top:808px;width:1.5px;height:3px;background:#ffffff;"></div>
<div class="r" style="left:1306px;top:168px;width:1px;height:879px;background:#2a2a2a;"></div>
<div class="r" style="left:1306.5px;top:177px;width:15.5px;height:3px;background:#bdbdbd;"></div>
<div class="r" style="left:1312.3px;top:247px;width:5.7px;height:6px;background:#7fdc1b;"></div>
<div class="r" style="left:1307px;top:262px;width:15px;height:5.9px;background:#1d5fb4;"></div>
<div class="r" style="left:1307px;top:275px;width:15px;height:5.8px;background:#1d5fb4;"></div>
<div class="r" style="left:1307px;top:297.1px;width:15px;height:5.8px;background:#1d5fb4;"></div>
<div class="r" style="left:1307px;top:306px;width:15px;height:5.9px;background:#1d5fb4;"></div>
<div class="r" style="left:1307px;top:313.9px;width:15px;height:9.8px;background:#1d5fb4;"></div>
<div class="r" style="left:1307px;top:325.8px;width:15px;height:9.8px;background:#1d5fb4;"></div>
<div class="r" style="left:1307px;top:343.2px;width:15px;height:5.5px;background:#1d5fb4;"></div>
<div class="r" style="left:1307px;top:351.4px;width:15px;height:10.2px;background:#1d5fb4;"></div>
<div class="r" style="left:1307px;top:366.3px;width:15px;height:5.5px;background:#1d5fb4;"></div>
<div class="r" style="left:1307px;top:412.7px;width:15px;height:6.2px;background:#1d5fb4;"></div>
<div class="r" style="left:1307px;top:469.6px;width:15px;height:6.2px;background:#1d5fb4;"></div>
<div class="r" style="left:1307px;top:504.8px;width:15px;height:6.2px;background:#1d5fb4;"></div>
<div class="r" style="left:1307px;top:580.2px;width:15px;height:9.6px;background:#1d5fb4;"></div>
<div class="r" style="left:1307px;top:634.8px;width:15px;height:6.1px;background:#1d5fb4;"></div>
<div class="r" style="left:1307px;top:708.5px;width:15px;height:13.7px;background:#1d5fb4;"></div>
<div class="r" style="left:1307px;top:731px;width:15px;height:5.7px;background:#1d5fb4;"></div>
<div class="r" style="left:1307px;top:747px;width:15px;height:6.1px;background:#1d5fb4;"></div>
<div class="r" style="left:1307px;top:765.4px;width:15px;height:5.5px;background:#1d5fb4;"></div>
<div class="r" style="left:1307px;top:778.1px;width:15px;height:5.7px;background:#1d5fb4;"></div>
<div class="r" style="left:1307px;top:840.8px;width:15px;height:6.4px;background:#1d5fb4;"></div>
<div class="r" style="left:1307px;top:872px;width:15px;height:6.2px;background:#1d5fb4;"></div>
<div class="r" style="left:1307px;top:927px;width:15px;height:6.4px;background:#1d5fb4;"></div>
<div class="r" style="left:1307px;top:975.1px;width:15px;height:6.4px;background:#1d5fb4;"></div>
<div class="r" style="left:1307px;top:999.7px;width:15px;height:6.4px;background:#1d5fb4;"></div>
<div class="r" style="left:1322px;top:168px;width:1px;height:879px;background:#1a1a1a;"></div>
<svg class="r" style="left:102.6px;top:308.6px;" width="14" height="12.5" viewBox="0 0 14 12.5"><path d="M8.700 2.400A4.500 4.500 0 1 0 8.700 10.100" fill="none" stroke="#519aba" stroke-width="3"/><path d="M5.800 6.250h3.400M7.500 4.550v3.400M10.100 6.250h3.400M11.800 4.550v3.400" stroke="#79bbd8" stroke-width="1.150"/></svg>
<svg class="r" style="left:102.6px;top:335px;" width="14" height="12.5" viewBox="0 0 14 12.5"><path d="M8.700 2.400A4.500 4.500 0 1 0 8.700 10.100" fill="none" stroke="#519aba" stroke-width="3"/><path d="M5.800 6.250h3.400M7.500 4.550v3.400M10.100 6.250h3.400M11.800 4.550v3.400" stroke="#79bbd8" stroke-width="1.150"/></svg>
<svg class="r" style="left:92px;top:360.4px;" width="15" height="14" viewBox="0 0 15 14"><rect x="2.700" y="2.200" width="9.600" height="9.600" rx="1.200" transform="rotate(45 7.500 7)" fill="#41535b"/><path d="M7.500 4.200v5.400M7.500 6.200l1.800 1.500" stroke="#252526" stroke-width="1"/></svg>
<svg class="r" style="left:92.5px;top:388.3px;" width="15" height="12" viewBox="0 0 15 12"><path d="M.6 8.500V.6h10.800" fill="none" stroke="#a074c4" stroke-width="1.200"/><rect x="2.600" y="2.800" width="12.200" height="9" fill="#a074c4"/><path d="M3.800 10.600l3.200-4.200 2.400 2.800 1.600-1.500 2.600 2.900z" fill="#252526"/><circle cx="12" cy="5.300" r="1" fill="#252526"/></svg>
<svg class="r" style="left:96px;top:412.6px;" width="12" height="15.4" viewBox="0 0 12 15.4"><rect x="0" y="0" width="12" height="15.400" fill="#6d8086"/><path d="M5 11.500h2v2H5z" fill="#252526"/></svg>
<div class="r" style="left:1px;top:1px;width:1px;height:27px;background:#d9d1ba;opacity:.7;"></div>
<div class="r" style="left:4px;top:1px;width:1321px;height:1px;background:#b8b09c;opacity:.9;"></div>
<svg class="r" style="left:7.5px;top:4px;" width="15.5" height="15" viewBox="0 0 15.5 15"><path d="M11 .4l3.800 1.700v10.800L11 14.600 4.300 8.500 1.700 10.500.4 9.800V5.200l1.300-.7 2.600 2z" fill="#1f9cf0"/><path d="M11 4.400L7 7.500l4 3.100z" fill="#b39a72"/><path d="M11 .4l3.800 1.700v10.800L11 14.600z" fill="#3cb0ff"/></svg>
<div class="r" style="left:1275.3px;top:13.3px;width:13.3px;height:5.3px;background:#d4d4d4;border:1px solid #2e2619;box-sizing:border-box;"></div>
<div class="r" style="left:1292.2px;top:5px;width:13.3px;height:13.7px;background:#d4d4d4;border:1px solid #2e2619;box-sizing:border-box;"></div>
<div class="r" style="left:1295px;top:9.4px;width:7.7px;height:6.5px;background:#b3986f;border:1px solid #2e2619;box-sizing:border-box;"></div>
<svg class="r" style="left:1308.5px;top:4.5px;" width="15" height="15" viewBox="0 0 15 15"><path d="M3.200 .8L7.500 4.600 11.800 .8 14.200 3.200 10.400 7.500 14.200 11.800 11.800 14.200 7.500 10.400 3.200 14.200 .8 11.800 4.600 7.500 .8 3.200z" fill="#d4d4d4" stroke="#2e2619" stroke-width="1" stroke-linejoin="round"/></svg>
<svg class="r" style="left:700px;top:8px;" width="18" height="23" viewBox="700 8 18 23"><path d="M703.600 10.800V28l3.700-3.600 2.600 5.200 2-.9-2.500-5.500 5-.4z" fill="#f4f4f4" stroke="#0a0806" stroke-width="1.100" stroke-linejoin="round"/></svg>
</div>
</body></html>
